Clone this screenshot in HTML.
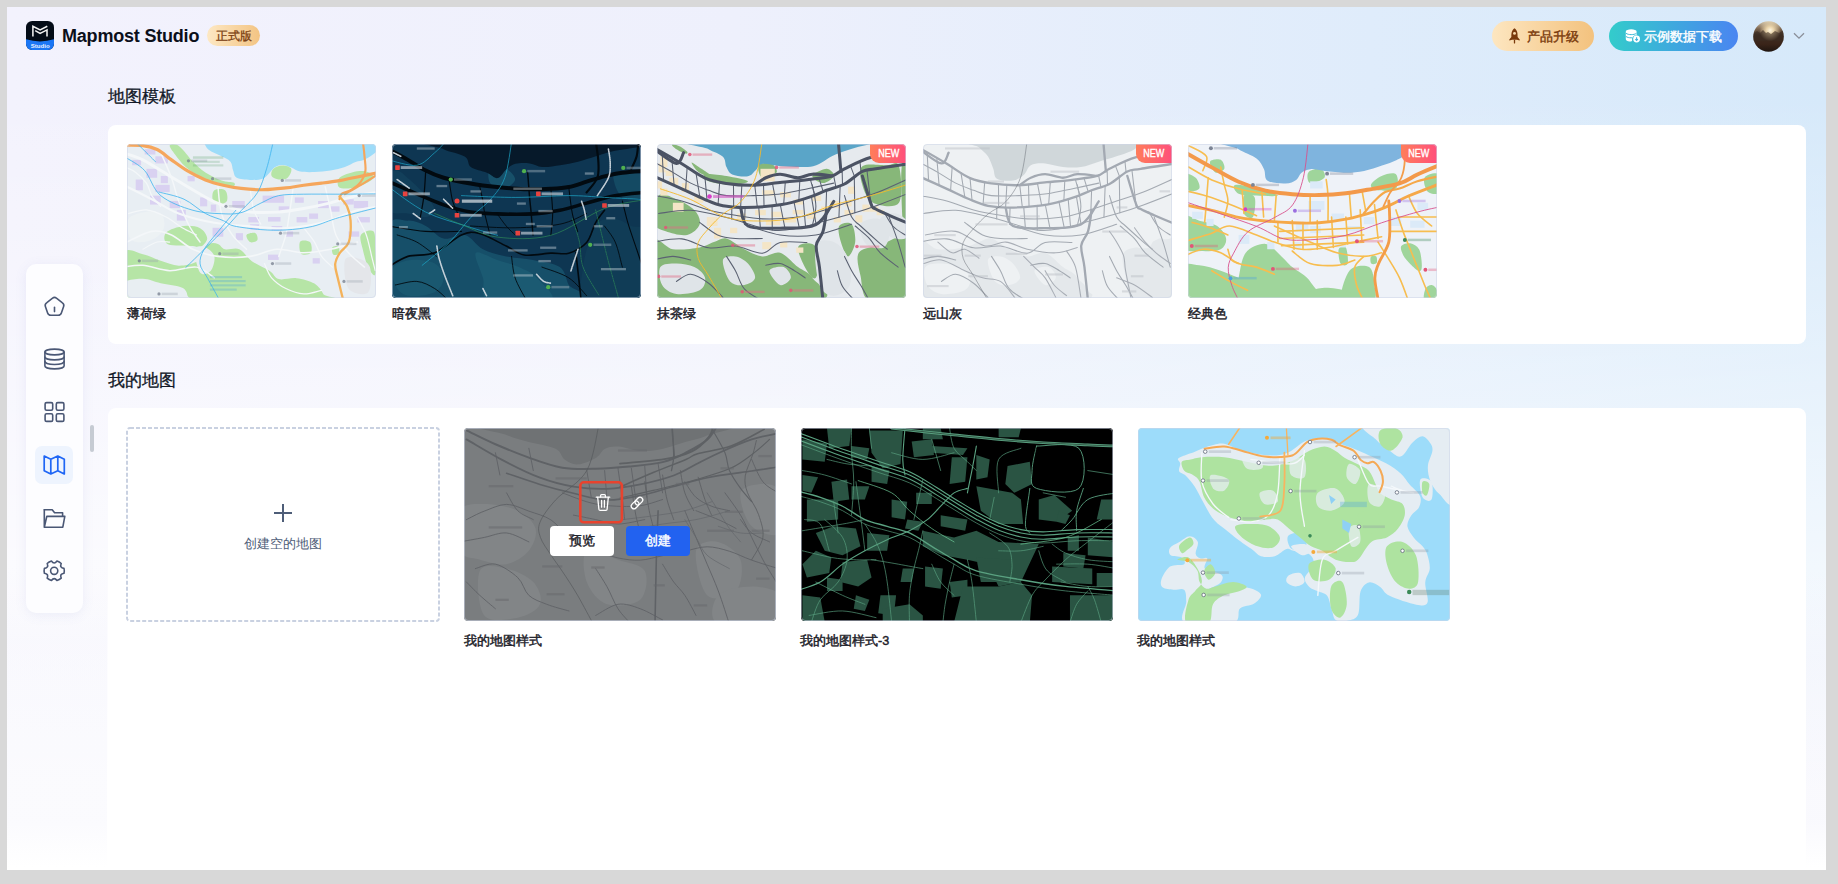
<!DOCTYPE html>
<html><head><meta charset="utf-8">
<style>
*{box-sizing:border-box;margin:0;padding:0}
html,body{width:1838px;height:884px;overflow:hidden;background:#d8d8d8;font-family:"Liberation Sans",sans-serif}
.app{position:absolute;left:7px;top:7px;width:1819px;height:863px;overflow:hidden;
 background:linear-gradient(180deg,rgba(255,255,255,0) 0px,rgba(255,255,255,0) 90px,#ffffff 780px),linear-gradient(90deg,#f3f2fd 0%,#eef0fc 40%,#dfecfb 75%,#d6e9fa 100%)}
.abs{position:absolute}
.logo{left:19.2px;top:14.2px;width:28px;height:29px}
.brand{left:55px;top:15.7px;font-size:18px;font-weight:bold;color:#0b0f1a;line-height:26px;letter-spacing:-0.2px}
.badge{left:200px;top:18px;width:53px;height:21px;border-radius:11px;background:linear-gradient(90deg,#fde8c4,#f3c483);color:#7b3f12;font-size:11.7px;line-height:22px;text-align:center;-webkit-text-stroke:0.3px #7b3f12}
.btn-up{left:1485px;top:13.5px;width:102px;height:30px;border-radius:15px;background:linear-gradient(90deg,#fde6c0,#f3c27e);color:#7a3a0c;font-size:13px;line-height:31px;-webkit-text-stroke:0.4px #7a3a0c}
.btn-dl{left:1602px;top:13.5px;width:129px;height:30px;border-radius:15px;background:linear-gradient(90deg,#33cccb,#4a85f1);color:#fff;font-size:13px;line-height:31px;-webkit-text-stroke:0.4px #fff}
.avatar{left:1746px;top:13.5px;width:30.5px;height:30.5px;border-radius:50%;background:radial-gradient(ellipse 30% 25% at 52% 30%,rgba(255,240,210,0.9) 0%,rgba(255,230,190,0) 100%),linear-gradient(180deg,#e9e2cf 0%,#b9a88a 18%,#5a4634 38%,#3b2a1f 60%,#2a1b14 100%)}
.title{font-size:17px;color:#111827;line-height:24px;-webkit-text-stroke:0.3px #111827}
.card{background:#fff;border-radius:8px}
.sidebar{left:19px;top:257px;width:57px;height:349px;border-radius:10px;background:#fdfdff;box-shadow:0 2px 12px rgba(110,120,200,0.10)}
.thumb{position:absolute;border-radius:4px;overflow:hidden}.thumb::after{content:"";position:absolute;left:0;top:0;right:0;bottom:0;border:1px solid rgba(205,214,232,0.55);border-radius:4px}
.label{position:absolute;font-size:12.6px;font-weight:400;color:#1d2129;line-height:18px;-webkit-text-stroke:0.45px #1d2129}
.newb{position:absolute;right:0;top:0;width:36px;height:19px;border-radius:0 4px 0 9px;background:linear-gradient(90deg,#ff7d5a,#ff4f7b);color:#fff;font-size:10px;line-height:20px;text-align:center}.newb span{display:inline-block;transform:scaleX(0.9);-webkit-text-stroke:0.35px #fff}
</style></head><body>
<div class="app">
 <!-- header -->
 <svg class="abs logo" viewBox="0 0 28 29">
  <defs><clipPath id="lc"><rect x="0" y="0" width="28" height="29" rx="6.2"/></clipPath></defs>
  <g clip-path="url(#lc)">
   <rect width="28" height="29" fill="#040c17"/>
   <path d="M0 18.3 Q14 22.6 28 18.3 V29 H0Z" fill="#1b76f4"/>
  </g>
  <path d="M6.9 15.6 V5.3 L14.1 8.9 L21.3 5.3" fill="none" stroke="#f2f2f2" stroke-width="1.55" stroke-linejoin="miter"/>
  <path d="M9.2 9.6 L14.1 12.4 L21 8.9 V15.6" fill="none" stroke="#f2f2f2" stroke-width="1.55" stroke-linejoin="miter"/>
  <text x="14.2" y="26.9" font-size="6.1" font-weight="bold" fill="#e8f0ff" text-anchor="middle" font-family="Liberation Sans">Studio</text>
 </svg>
 <div class="abs brand">Mapmost Studio</div>
 <div class="abs badge">正式版</div>

 <div class="abs btn-up"><svg class="abs" style="left:17px;top:7.5px" width="11" height="16" viewBox="0 0 11 16"><path d="M5.5 0.2 C8.4 2.1 8.8 5.4 8.6 9.0 L10.7 11.4 V12.6 L7.9 11.7 H3.1 L0.3 12.6 V11.4 L2.4 9.0 C2.2 5.4 2.6 2.1 5.5 0.2Z" fill="#7a3a0c"/><circle cx="5.5" cy="5.4" r="1.45" fill="#f9dcae"/><path d="M5.5 12.4 V14.9" stroke="#7a3a0c" stroke-width="1.3" stroke-linecap="round"/></svg><span class="abs" style="left:35px;top:0">产品升级</span></div>
 <div class="abs btn-dl"><svg class="abs" style="left:16px;top:8px" width="16" height="14" viewBox="0 0 16 14"><path d="M0.8 2.6 C0.8 1.2 3.2 0.3 6.2 0.3 C9.2 0.3 11.6 1.2 11.6 2.6 V6.4 A4 4 0 0 0 7.2 11.6 C7 11.8 6.6 12.6 6.2 12.6 C3.2 12.6 0.8 11.7 0.8 10.3Z" fill="#fff"/><path d="M1 4.3 C2.4 5.3 4 5.6 6.2 5.6 C8.4 5.6 10 5.3 11.4 4.3 M1 7.5 C2.4 8.5 4 8.8 6.2 8.8 C6.6 8.8 7 8.8 7.3 8.7" fill="none" stroke="#3cb8d8" stroke-width="1"/><circle cx="11.6" cy="10" r="3.4" fill="#fff"/><path d="M11.6 8.2 V11.4 M10.3 10.2 L11.6 11.5 L12.9 10.2" stroke="#3fb2dc" stroke-width="1.1" fill="none"/></svg><span class="abs" style="left:35px;top:0">示例数据下载</span></div>
 <svg class="abs" style="left:1746px;top:13.5px" width="31" height="31" viewBox="0 0 31 31"><defs><clipPath id="av"><circle cx="15.5" cy="15.5" r="15.2"/></clipPath><radialGradient id="sun" cx="0.55" cy="0.3" r="0.35"><stop offset="0" stop-color="#fff6e0"/><stop offset="0.35" stop-color="#e8d2a8"/><stop offset="1" stop-color="#e8d2a8" stop-opacity="0"/></radialGradient><linearGradient id="avg" x1="0" y1="0" x2="0" y2="1"><stop offset="0" stop-color="#d9cdb4"/><stop offset="0.25" stop-color="#7d6650"/><stop offset="0.45" stop-color="#3f2f24"/><stop offset="0.75" stop-color="#3a2419"/><stop offset="1" stop-color="#1e1510"/></linearGradient></defs><g clip-path="url(#av)"><rect width="31" height="31" fill="url(#avg)"/><rect width="31" height="31" fill="url(#sun)"/><path d="M0 13 L4 10 L7 12 L10 9 L13 12 L15 11 L18 13 L22 10 L26 12 L31 9 V20 H0Z" fill="#3b2c22" opacity="0.6"/></g></svg>
 <svg class="abs" style="left:1786px;top:25px" width="12" height="8" viewBox="0 0 12 8"><path d="M1 1.2 L6 6.2 L11 1.2" fill="none" stroke="#8a8f99" stroke-width="1.3"/></svg>

 <div class="abs" style="left:0;top:560px;width:100px;height:300px;background:linear-gradient(180deg,rgba(236,236,250,0) 0%,rgba(236,236,250,0.22) 25%,rgba(236,236,250,0.22) 85%,rgba(236,236,250,0) 100%)"></div>
 <div class="abs" style="left:1799px;top:560px;width:20px;height:300px;background:linear-gradient(180deg,rgba(236,236,250,0) 0%,rgba(236,236,250,0.3) 30%,rgba(236,236,250,0.3) 85%,rgba(236,236,250,0) 100%)"></div>
 <!-- sidebar -->
 <div class="abs sidebar"></div>
 <div class="abs" style="left:28px;top:439px;width:38px;height:38px;border-radius:7px;background:#eef4fe"></div>
 <svg class="abs" style="left:-7px;top:-7px" width="1838" height="884" viewBox="0 0 1838 884">
  <g fill="none" stroke="#4a5775" stroke-width="1.6" stroke-linejoin="round" stroke-linecap="round">
   <path d="M56.45 298.20 L62.45 302.80 Q64.40 304.20 63.62 306.47 L61.38 313.03 Q60.60 315.30 58.20 315.30 L50.80 315.30 Q48.40 315.30 47.62 313.03 L45.38 306.47 Q44.60 304.20 46.55 302.80 L52.55 298.20 Q54.50 296.6 56.45 298.20Z"/>
   <path d="M54.5 307.4 V311.6"/>
   <ellipse cx="54.5" cy="352" rx="9.6" ry="2.9"/>
   <path d="M44.9 352 V366 C44.9 367.6 49.2 368.9 54.5 368.9 C59.8 368.9 64.1 367.6 64.1 366 V352"/>
   <path d="M44.9 357 C44.9 358.6 49.2 359.9 54.5 359.9 C59.8 359.9 64.1 358.6 64.1 357"/>
   <path d="M44.9 361.6 C44.9 363.2 49.2 364.5 54.5 364.5 C59.8 364.5 64.1 363.2 64.1 361.6"/>
   <rect x="45.1" y="402.6" width="7.6" height="7.6" rx="1.5"/>
   <rect x="56.3" y="402.6" width="7.6" height="7.6" rx="1.5"/>
   <rect x="45.1" y="413.8" width="7.6" height="7.6" rx="1.5"/>
   <rect x="56.3" y="413.8" width="7.6" height="7.6" rx="1.5"/>
   <path d="M44.3 509.8 H52.2 L54.6 512.8 H62.6 V516"/>
   <path d="M44.3 509.8 V527.2 H62.8 L64.8 516.4 H46.8 L44.3 527.2"/>
   <path d="M64.00 568.36 Q64.61 570.80 64.00 573.24 Q59.40 573.80 61.22 578.07 Q59.40 579.81 56.98 580.51 Q54.20 576.80 51.42 580.51 Q49.00 579.81 47.18 578.07 Q49.00 573.80 44.40 573.24 Q43.79 570.80 44.40 568.36 Q49.00 567.80 47.18 563.53 Q49.00 561.79 51.42 561.09 Q54.20 564.80 56.98 561.09 Q59.40 561.79 61.22 563.53 Q59.40 567.80 64.00 568.36Z"/>
   <circle cx="54.2" cy="570.8" r="3.6"/>
  </g>
  <path d="M44.2 456 L50.8 459.2 L57.8 456 L64.3 459.2 V474 L57.8 470.8 L50.8 474 L44.2 470.8Z M50.8 459.2 V474 M57.8 456 V470.8" fill="none" stroke="#1f66f5" stroke-width="1.7" stroke-linejoin="round"/>
  <rect x="90" y="425" width="4" height="27" rx="2" fill="#c6cbd3"/>
 </svg>

 <!-- section 1 -->
 <div class="abs title" style="left:101px;top:78px">地图模板</div>
 <div class="abs card" style="left:101px;top:118px;width:1698px;height:219px"></div>
 <div class="thumb" style="left:120px;top:137px;width:249px;height:153.5px"><svg style="position:absolute;left:-2px;top:-2px" width="254" height="158" viewBox="0 0 1421 884" preserveAspectRatio="none"><rect width="1421" height="884" fill="#e8eef3"/><path d="M440 0 C445 9 453 32 470 45 C487 58 520 69 540 80 C560 91 579 97 590 110 C601 123 599 145 605 160 C611 175 609 191 625 200 C641 209 676 211 700 212 C724 213 752 212 770 205 C788 198 798 181 810 170 C822 159 828 147 840 140 C852 133 865 128 880 128 C895 128 913 136 930 142 C947 148 958 161 980 165 C1002 169 1032 169 1060 168 C1088 167 1122 165 1150 160 C1178 155 1207 148 1230 140 C1253 132 1272 119 1290 112 C1308 105 1322 107 1340 98 C1358 89 1385 73 1400 60 C1415 47 1425 32 1430 20 C1435 8 1595 -5 1430 -10 C1265 -15 605 -12 440 -10 C275 -8 435 -9 440 0Z" fill="#9ddcf9"/><path d="M290 15 C303 20 315 34 330 50 C345 66 360 90 380 110 C400 130 423 152 450 170 C477 188 513 205 540 215 C567 225 600 222 610 228 C620 234 615 248 600 250 C585 252 548 248 520 240 C492 232 460 217 430 200 C400 183 365 162 340 140 C315 118 295 90 280 70 C265 50 248 29 250 20 C252 11 277 10 290 15Z" fill="#b6e5a6"/><path d="M830 150 C840 140 863 132 880 132 C897 132 925 139 930 150 C935 161 922 190 910 200 C898 210 875 212 860 210 C845 208 825 200 820 190 C815 180 820 160 830 150Z" fill="#b6e5a6"/><path d="M1200 200 C1212 187 1245 176 1270 170 C1295 164 1330 160 1350 165 C1370 170 1393 188 1390 200 C1387 212 1353 230 1330 240 C1307 250 1272 258 1250 260 C1228 262 1203 260 1195 250 C1187 240 1188 213 1200 200Z" fill="#b6e5a6"/><path d="M230 507 C245 490 298 474 330 470 C362 466 398 470 420 482 C442 494 460 522 460 540 C460 558 433 583 420 590 C407 597 410 585 380 582 C350 579 265 584 240 572 C215 560 215 524 230 507Z" fill="#b6e5a6"/><path d="M500 270 C512 262 548 260 560 270 C572 280 577 317 570 330 C563 343 533 352 520 350 C507 348 493 333 490 320 C487 307 488 278 500 270Z" fill="#b6e5a6"/><path d="M-10 625 C8 581 65 621 100 628 C135 635 167 654 200 665 C233 676 267 691 300 692 C333 693 378 684 400 670 C422 656 418 627 430 610 C442 593 455 577 470 570 C485 563 505 565 520 570 C535 575 540 595 560 600 C580 605 615 589 640 600 C665 611 682 647 710 667 C738 687 785 705 810 722 C835 739 835 760 860 767 C885 774 927 758 960 762 C993 766 1035 777 1060 792 C1085 807 1102 836 1110 852 C1118 868 1297 884 1110 890 C923 896 177 934 -10 890 C-197 846 -28 669 -10 625Z" fill="#b6e5a6"/><path d="M1320 520 C1330 503 1377 487 1390 500 C1403 513 1398 560 1400 600 C1402 640 1407 725 1400 742 C1393 759 1372 724 1360 700 C1348 676 1337 630 1330 600 C1323 570 1310 537 1320 520Z" fill="#b6e5a6"/><path d="M980 557 C988 546 1025 550 1035 560 C1045 570 1048 609 1040 620 C1032 631 995 636 985 625 C975 614 972 568 980 557Z" fill="#b6e5a6"/><path d="M1160 590 C1165 582 1189 579 1195 585 C1201 591 1200 618 1195 625 C1190 632 1171 636 1165 630 C1159 624 1155 598 1160 590Z" fill="#b6e5a6"/><path d="M680 520 C685 512 720 505 730 510 C740 515 745 542 740 550 C735 558 710 565 700 560 C690 555 675 528 680 520Z" fill="#b6e5a6"/><path d="M1230 662 C1238 634 1277 644 1300 650 C1323 656 1360 668 1370 700 C1380 732 1380 822 1360 842 C1340 862 1272 850 1250 820 C1228 790 1222 690 1230 662Z" fill="#e4e6ea"/><path d="M-10 790 C8 769 65 765 100 765 C135 765 163 782 200 790 C237 798 295 803 320 815 C345 827 347 848 350 860 C353 872 400 885 340 890 C280 895 48 907 -10 890 C-68 873 -28 811 -10 790Z" fill="#e8eef2"/><path d="M390 600 C395 577 432 583 450 590 C468 597 495 618 500 640 C505 662 493 705 480 720 C467 735 435 750 420 730 C405 710 385 623 390 600Z" fill="#e8eef2"/><path d="M20 430 C35 405 90 395 120 390 C150 385 183 387 200 400 C217 413 223 448 220 470 C217 492 200 515 180 530 C160 545 125 558 100 560 C75 562 43 562 30 540 C17 518 5 455 20 430Z" fill="#edf2f4"/><rect x="110" y="40" width="60" height="30" fill="#d9d1f1"/><rect x="170" y="80" width="70" height="40" fill="#d9d1f1"/><rect x="120" y="150" width="60" height="50" fill="#d9d1f1"/><rect x="60" y="210" width="40" height="60" fill="#d9d1f1"/><rect x="170" y="240" width="80" height="40" fill="#d9d1f1"/><rect x="140" y="300" width="60" height="50" fill="#d9d1f1"/><rect x="250" y="330" width="60" height="40" fill="#d9d1f1"/><rect x="290" y="380" width="50" height="60" fill="#d9d1f1"/><rect x="420" y="310" width="40" height="50" fill="#d9d1f1"/><rect x="480" y="350" width="30" height="40" fill="#d9d1f1"/><rect x="490" y="480" width="60" height="50" fill="#d9d1f1"/><rect x="600" y="330" width="70" height="40" fill="#d9d1f1"/><rect x="690" y="420" width="60" height="30" fill="#d9d1f1"/><rect x="770" y="300" width="120" height="40" fill="#d9d1f1"/><rect x="800" y="420" width="70" height="25" fill="#d9d1f1"/><rect x="950" y="310" width="50" height="30" fill="#d9d1f1"/><rect x="960" y="420" width="60" height="30" fill="#d9d1f1"/><rect x="1030" y="400" width="50" height="30" fill="#d9d1f1"/><rect x="1080" y="330" width="60" height="40" fill="#d9d1f1"/><rect x="1150" y="360" width="50" height="30" fill="#d9d1f1"/><rect x="1220" y="320" width="60" height="30" fill="#d9d1f1"/><rect x="1280" y="330" width="80" height="40" fill="#d9d1f1"/><rect x="1300" y="420" width="70" height="30" fill="#d9d1f1"/><rect x="1250" y="500" width="60" height="30" fill="#d9d1f1"/><rect x="860" y="360" width="60" height="30" fill="#d9d1f1"/><rect x="700" y="460" width="50" height="30" fill="#d9d1f1"/><rect x="820" y="470" width="60" height="25" fill="#d9d1f1"/><rect x="620" y="510" width="40" height="40" fill="#d9d1f1"/><rect x="900" y="500" width="40" height="30" fill="#d9d1f1"/><rect x="800" y="630" width="60" height="30" fill="#d9d1f1"/><rect x="1050" y="650" width="40" height="30" fill="#d9d1f1"/><rect x="40" y="100" width="50" height="30" fill="#d9d1f1"/><rect x="200" y="190" width="40" height="40" fill="#d9d1f1"/><rect x="350" y="190" width="40" height="30" fill="#d9d1f1"/><path d="M-10 60 C8 67 57 78 100 100 C143 122 200 160 250 190 C300 220 358 256 400 280 C442 304 467 320 500 335 C533 350 567 362 600 372 C633 382 658 389 700 392 C742 395 800 395 850 392 C900 389 950 381 1000 372 C1050 363 1100 352 1150 340 C1200 328 1253 310 1300 300 C1347 290 1408 283 1430 280" fill="none" stroke="#f4f7f9" stroke-width="16" stroke-linecap="round" stroke-linejoin="round"/><path d="M-10 240 C17 253 98 293 150 320 C202 347 242 378 300 400 C358 422 433 440 500 452 C567 464 633 467 700 472 C767 477 833 485 900 482 C967 479 1033 469 1100 452 C1167 435 1245 397 1300 382 C1355 367 1408 364 1430 360" fill="none" stroke="#f4f7f9" stroke-width="12" stroke-linecap="round" stroke-linejoin="round"/><path d="M10 560 C33 550 108 507 150 500 C192 493 222 503 260 520 C298 537 337 580 380 600 C423 620 467 633 520 640 C573 647 645 647 700 640 C755 633 800 603 850 600 C900 597 950 620 1000 620 C1050 620 1100 610 1150 600 C1200 590 1275 567 1300 560" fill="none" stroke="#f4f7f9" stroke-width="9" stroke-linecap="round" stroke-linejoin="round"/><path d="M-10 700 C8 698 57 687 100 690 C143 693 200 718 250 720 C300 722 358 693 400 700 C442 707 483 750 500 760" fill="none" stroke="#f4f7f9" stroke-width="8" stroke-linecap="round" stroke-linejoin="round"/><path d="M200 60 C210 83 243 155 260 200 C277 245 283 285 300 330 C317 375 340 432 360 470 C380 508 410 545 420 560" fill="none" stroke="#f4f7f9" stroke-width="8" stroke-linecap="round" stroke-linejoin="round"/><path d="M520 250 C523 275 527 355 540 400 C553 445 577 487 600 520 C623 553 667 587 680 600" fill="none" stroke="#f4f7f9" stroke-width="8" stroke-linecap="round" stroke-linejoin="round"/><path d="M940 260 C937 283 927 357 920 400 C913 443 910 480 900 520 C890 560 867 620 860 640" fill="none" stroke="#f4f7f9" stroke-width="8" stroke-linecap="round" stroke-linejoin="round"/><path d="M1120 250 C1125 272 1140 335 1150 380 C1160 425 1163 480 1180 520 C1197 560 1223 590 1250 620 C1277 650 1325 687 1340 700" fill="none" stroke="#f4f7f9" stroke-width="8" stroke-linecap="round" stroke-linejoin="round"/><path d="M20 400 C37 397 85 377 120 380 C155 383 197 403 230 420 C263 437 292 463 320 480 C348 497 387 513 400 520" fill="none" stroke="#f4f7f9" stroke-width="7" stroke-linecap="round" stroke-linejoin="round"/><path d="M700 260 C703 280 710 347 720 380 C730 413 753 447 760 460" fill="none" stroke="#f4f7f9" stroke-width="7" stroke-linecap="round" stroke-linejoin="round"/><path d="M1000 480 C1010 493 1043 533 1060 560 C1077 587 1083 617 1100 640 C1117 663 1150 690 1160 700" fill="none" stroke="#f4f7f9" stroke-width="7" stroke-linecap="round" stroke-linejoin="round"/><path d="M1300 420 C1308 437 1337 483 1350 520 C1363 557 1372 607 1380 640 C1388 673 1397 707 1400 720" fill="none" stroke="#f4f7f9" stroke-width="7" stroke-linecap="round" stroke-linejoin="round"/><path d="M0 140 C10 145 40 155 60 170 C80 185 105 208 120 230 C135 252 137 278 150 300 C163 322 192 350 200 360" fill="none" stroke="#f4f7f9" stroke-width="7" stroke-linecap="round" stroke-linejoin="round"/><path d="M780 680 C787 693 800 737 820 760 C840 783 870 805 900 820 C930 835 967 848 1000 850 C1033 852 1083 833 1100 830" fill="none" stroke="#f4f7f9" stroke-width="7" stroke-linecap="round" stroke-linejoin="round"/><path d="M100 600 C113 593 155 567 180 560 C205 553 238 560 250 560" fill="none" stroke="#f4f7f9" stroke-width="6" stroke-linecap="round" stroke-linejoin="round"/><path d="M-10 18 C8 18 68 16 100 20 C132 24 153 29 180 42 C207 55 232 80 260 100 C288 120 318 143 350 162 C382 181 417 199 450 212 C483 225 517 234 550 242 C583 250 612 256 650 260 C688 264 738 268 780 267 C822 266 863 261 900 257 C937 253 967 246 1000 242 C1033 238 1067 234 1100 230 C1133 226 1167 222 1200 216 C1233 210 1262 204 1300 196 C1338 188 1408 173 1430 168" fill="none" stroke="#f5a65c" stroke-width="18" stroke-linecap="round" stroke-linejoin="round"/><path d="M1330 -5 C1332 9 1338 52 1340 80 C1342 108 1348 136 1345 160 C1342 184 1333 204 1320 222 C1307 240 1283 257 1265 268 C1247 279 1223 281 1212 290 C1201 299 1202 315 1200 320" fill="none" stroke="#f5a65c" stroke-width="12" stroke-linecap="round" stroke-linejoin="round"/><path d="M1230 292 C1245 283 1292 257 1320 240 C1348 223 1382 203 1400 190 C1418 177 1425 165 1430 160" fill="none" stroke="#f5a65c" stroke-width="12" stroke-linecap="round" stroke-linejoin="round"/><path d="M1200 305 C1207 314 1232 338 1242 360 C1252 382 1260 407 1262 440 C1264 473 1262 530 1252 560 C1242 590 1215 600 1202 620 C1189 640 1178 659 1176 682 C1174 705 1182 725 1190 760 C1198 795 1217 868 1222 890" fill="none" stroke="#f4b25a" stroke-width="13" stroke-linecap="round" stroke-linejoin="round"/><path d="M10 90 C27 102 78 125 110 160 C142 195 155 263 200 300 C245 337 320 365 380 382 C440 399 513 400 560 402 C607 404 627 402 660 392 C693 382 727 357 760 342 C793 327 820 308 860 300 C900 292 943 293 1000 292 C1057 291 1128 292 1200 292 C1272 292 1392 290 1430 290" fill="none" stroke="#3db4ef" stroke-width="4.5" stroke-linecap="round" stroke-linejoin="round"/><path d="M190 280 C213 287 287 300 330 320 C373 340 413 380 450 400 C487 420 523 428 550 440 C577 452 575 462 610 470 C645 478 712 486 760 490 C808 494 852 495 900 492 C948 489 1000 484 1050 472 C1100 460 1137 440 1200 422 C1263 404 1392 372 1430 362" fill="none" stroke="#3db4ef" stroke-width="4.5" stroke-linecap="round" stroke-linejoin="round"/><path d="M830 -5 C824 21 807 102 792 150 C777 198 765 243 742 282 C719 321 682 349 652 382 C622 415 595 447 562 482 C529 517 489 555 452 592 C415 629 359 684 340 702" fill="none" stroke="#3db4ef" stroke-width="4.5" stroke-linecap="round" stroke-linejoin="round"/><path d="M620 382 C603 402 550 465 520 502 C490 539 459 572 442 602 C425 632 417 655 420 682 C423 709 443 727 462 762 C481 797 520 869 532 890" fill="none" stroke="#3db4ef" stroke-width="4.5" stroke-linecap="round" stroke-linejoin="round"/><path d="M70 10 C80 20 113 53 130 70 C147 87 163 103 170 110" fill="none" stroke="#3db4ef" stroke-width="4.5" stroke-linecap="round" stroke-linejoin="round"/><circle cx="355" cy="105" r="9" fill="#7c8494" opacity="0.8"/><rect x="370" y="98" width="90" height="14" fill="#9aa3b0" opacity="0.35"/><circle cx="490" cy="205" r="9" fill="#7c8494" opacity="0.8"/><rect x="505" y="198" width="90" height="14" fill="#9aa3b0" opacity="0.35"/><circle cx="880" cy="215" r="9" fill="#7c8494" opacity="0.8"/><rect x="895" y="208" width="90" height="14" fill="#9aa3b0" opacity="0.35"/><circle cx="565" cy="360" r="9" fill="#7c8494" opacity="0.8"/><rect x="580" y="353" width="90" height="14" fill="#9aa3b0" opacity="0.35"/><circle cx="870" cy="510" r="9" fill="#7c8494" opacity="0.8"/><rect x="885" y="503" width="90" height="14" fill="#9aa3b0" opacity="0.35"/><circle cx="1190" cy="570" r="9" fill="#7c8494" opacity="0.8"/><rect x="1205" y="563" width="90" height="14" fill="#9aa3b0" opacity="0.35"/><circle cx="530" cy="625" r="9" fill="#7c8494" opacity="0.8"/><rect x="545" y="618" width="90" height="14" fill="#9aa3b0" opacity="0.35"/><circle cx="80" cy="665" r="9" fill="#7c8494" opacity="0.8"/><rect x="95" y="658" width="90" height="14" fill="#9aa3b0" opacity="0.35"/><circle cx="825" cy="680" r="9" fill="#7c8494" opacity="0.8"/><rect x="840" y="673" width="90" height="14" fill="#9aa3b0" opacity="0.35"/><circle cx="190" cy="850" r="9" fill="#7c8494" opacity="0.8"/><rect x="205" y="843" width="90" height="14" fill="#9aa3b0" opacity="0.35"/><circle cx="1225" cy="780" r="9" fill="#7c8494" opacity="0.8"/><rect x="1240" y="773" width="90" height="14" fill="#9aa3b0" opacity="0.35"/><circle cx="1310" cy="300" r="9" fill="#7c8494" opacity="0.8"/><rect x="1325" y="293" width="90" height="14" fill="#9aa3b0" opacity="0.35"/><rect x="380" y="80" width="170" height="14" fill="#4f9a60" opacity="0.25"/><rect x="380" y="105" width="150" height="12" fill="#4f9a60" opacity="0.22"/><rect x="380" y="125" width="170" height="12" fill="#4f9a60" opacity="0.22"/><rect x="475" y="750" width="180" height="12" fill="#3d9be0" opacity="0.28"/><rect x="475" y="772" width="200" height="12" fill="#3d9be0" opacity="0.28"/><rect x="475" y="796" width="200" height="12" fill="#3d9be0" opacity="0.28"/><rect x="475" y="820" width="150" height="12" fill="#3d9be0" opacity="0.28"/></svg></div>
 <div class="thumb" style="left:385.2px;top:137px;width:249px;height:153.5px"><svg style="position:absolute;left:-2.2px;top:-2px" width="254" height="158" viewBox="0 0 1421 884" preserveAspectRatio="none"><rect width="1421" height="884" fill="#0e3652"/><path d="M-10 480 C8 405 65 442 100 440 C135 438 167 453 200 470 C233 487 263 532 300 540 C337 548 383 510 420 520 C457 530 482 580 520 600 C558 620 603 630 650 640 C697 650 750 650 800 660 C850 670 917 677 950 700 C983 723 983 768 1000 800 C1017 832 1218 875 1050 890 C882 905 167 958 -10 890 C-187 822 -28 555 -10 480Z" fill="#164f69"/><path d="M480 620 C493 603 560 647 600 660 C640 673 683 683 720 700 C757 717 790 728 820 760 C850 792 943 868 900 890 C857 912 623 912 560 890 C497 868 533 805 520 760 C507 715 467 637 480 620Z" fill="#1b5a72"/><path d="M-10 200 C-2 163 18 157 40 160 C62 163 93 197 120 220 C147 243 178 273 200 300 C222 327 250 360 250 380 C250 400 225 417 200 420 C175 423 135 407 100 400 C65 393 8 413 -10 380 C-28 347 -18 237 -10 200Z" fill="#123f5a"/><path d="M1150 470 C1178 425 1217 430 1250 430 C1283 430 1320 455 1350 470 C1380 485 1417 450 1430 520 C1443 590 1485 828 1430 890 C1375 952 1158 922 1100 890 C1042 858 1072 770 1080 700 C1088 630 1122 515 1150 470Z" fill="#103c56"/><path d="M20 700 C35 677 82 663 120 660 C158 657 220 663 250 680 C280 697 300 733 300 760 C300 787 283 823 250 840 C217 857 137 867 100 860 C63 853 43 827 30 800 C17 773 5 723 20 700Z" fill="#1a5870"/><path d="M560 140 C575 127 627 138 650 150 C673 162 702 192 700 210 C698 228 663 257 640 260 C617 263 573 250 560 230 C547 210 545 153 560 140Z" fill="#175069"/><path d="M1250 180 C1258 157 1320 167 1350 170 C1380 173 1417 178 1430 200 C1443 222 1452 282 1430 300 C1408 318 1330 330 1300 310 C1270 290 1242 203 1250 180Z" fill="#144a63"/><path d="M250 -10 C62 -2 272 25 300 40 C328 55 395 65 420 82 C445 99 432 125 452 140 C472 155 517 162 542 172 C567 182 584 205 602 202 C620 199 635 165 652 152 C669 139 680 127 702 122 C724 117 757 117 782 120 C807 123 824 138 852 140 C880 142 919 135 952 130 C985 125 1019 118 1052 110 C1085 102 1119 90 1152 80 C1185 70 1206 60 1252 50 C1298 40 1400 30 1430 20 C1460 10 1627 -5 1430 -10 C1233 -15 438 -18 250 -10Z" fill="#06192a"/><path d="M-10 40 C8 50 65 80 100 100 C135 120 167 143 200 160 C233 177 258 188 300 200 C342 212 400 223 450 232 C500 241 550 247 600 252 C650 257 700 262 750 264 C800 266 858 264 900 262 C942 260 967 259 1000 252 C1033 245 1067 232 1100 222 C1133 212 1167 200 1200 192 C1233 184 1262 177 1300 172 C1338 167 1408 162 1430 160" fill="none" stroke="#020a10" stroke-width="22" stroke-linecap="round" stroke-linejoin="round"/><path d="M-10 220 C17 232 98 268 150 290 C202 312 250 335 300 352 C350 369 400 384 450 392 C500 400 542 400 600 402 C658 404 742 405 800 402 C858 399 900 392 950 382 C1000 372 1050 355 1100 342 C1150 329 1195 312 1250 302 C1305 292 1400 285 1430 282" fill="none" stroke="#020a10" stroke-width="20" stroke-linecap="round" stroke-linejoin="round"/><path d="M1150 -10 C1152 8 1163 65 1165 100 C1167 135 1171 170 1160 200 C1149 230 1110 268 1100 282" fill="none" stroke="#020a10" stroke-width="12" stroke-linecap="round" stroke-linejoin="round"/><path d="M1390 -10 C1388 5 1387 53 1380 80 C1373 107 1355 138 1350 150" fill="none" stroke="#020a10" stroke-width="12" stroke-linecap="round" stroke-linejoin="round"/><path d="M-10 700 C8 690 57 653 100 640 C143 627 200 640 250 620 C300 600 358 538 400 520 C442 502 458 502 500 512 C542 522 608 562 650 582 C692 602 708 625 750 632 C792 639 858 624 900 622 C942 620 967 632 1000 622 C1033 612 1075 590 1100 562 C1125 534 1133 482 1150 452 C1167 422 1192 394 1200 382" fill="none" stroke="#020a10" stroke-width="9" stroke-linecap="round" stroke-linejoin="round"/><path d="M1040 620 L1070 890" fill="none" stroke="#020a10" stroke-width="9" stroke-linecap="round" stroke-linejoin="round"/><path d="M200 160 C198 183 195 257 190 300 C185 343 173 400 170 420" fill="none" stroke="#020a10" stroke-width="7" stroke-linecap="round" stroke-linejoin="round"/><path d="M330 210 C333 230 342 298 350 330 C358 362 375 388 380 400" fill="none" stroke="#020a10" stroke-width="6" stroke-linecap="round" stroke-linejoin="round"/><path d="M500 240 C503 255 515 303 520 330 C525 357 523 368 530 400 C537 432 555 500 560 520" fill="none" stroke="#020a10" stroke-width="6" stroke-linecap="round" stroke-linejoin="round"/><path d="M770 170 C772 192 777 262 780 300 C783 338 787 363 790 400 C793 437 798 500 800 520" fill="none" stroke="#020a10" stroke-width="8" stroke-linecap="round" stroke-linejoin="round"/><path d="M900 262 C902 285 910 357 910 400 C910 443 902 500 900 520" fill="none" stroke="#020a10" stroke-width="6" stroke-linecap="round" stroke-linejoin="round"/><path d="M1000 252 C1003 277 1012 359 1020 400 C1028 441 1045 483 1050 500" fill="none" stroke="#020a10" stroke-width="6" stroke-linecap="round" stroke-linejoin="round"/><path d="M-10 470 C25 475 132 495 200 500 C268 505 367 500 400 500" fill="none" stroke="#020a10" stroke-width="6" stroke-linecap="round" stroke-linejoin="round"/><path d="M600 402 C608 413 633 450 650 470 C667 490 692 512 700 520" fill="none" stroke="#020a10" stroke-width="5" stroke-linecap="round" stroke-linejoin="round"/><path d="M450 470 C492 472 617 482 700 480 C783 478 883 473 950 460 C1017 447 1075 410 1100 400" fill="none" stroke="#020a10" stroke-width="5" stroke-linecap="round" stroke-linejoin="round"/><path d="M40 520 C58 527 113 540 150 560 C187 580 242 627 260 640" fill="none" stroke="#020a10" stroke-width="5" stroke-linecap="round" stroke-linejoin="round"/><path d="M680 640 C683 660 687 720 700 760 C713 800 750 860 760 880" fill="none" stroke="#020a10" stroke-width="5" stroke-linecap="round" stroke-linejoin="round"/><path d="M850 700 C875 710 958 733 1000 760 C1042 787 1083 843 1100 860" fill="none" stroke="#020a10" stroke-width="5" stroke-linecap="round" stroke-linejoin="round"/><path d="M1300 330 C1305 350 1317 405 1330 450 C1343 495 1365 555 1380 600 C1395 645 1413 700 1420 720" fill="none" stroke="#020a10" stroke-width="6" stroke-linecap="round" stroke-linejoin="round"/><path d="M1200 470 C1210 485 1243 522 1260 560 C1277 598 1293 677 1300 700" fill="none" stroke="#020a10" stroke-width="5" stroke-linecap="round" stroke-linejoin="round"/><path d="M30 800 C50 797 113 777 150 780 C187 783 220 802 250 820 C280 838 317 878 330 890" fill="none" stroke="#020a10" stroke-width="5" stroke-linecap="round" stroke-linejoin="round"/><path d="M1222 40 C1224 53 1232 93 1232 120 C1232 147 1234 170 1222 200 C1210 230 1170 283 1160 300" fill="none" stroke="#d6dee4" stroke-width="9" stroke-linecap="round" stroke-linejoin="round" stroke-dasharray="6 5" opacity="0.9"/><path d="M1072 332 C1074 340 1083 363 1087 380 C1091 397 1095 423 1097 432" fill="none" stroke="#d6dee4" stroke-width="9" stroke-linecap="round" stroke-linejoin="round" stroke-dasharray="6 5" opacity="0.9"/><path d="M1052 600 C1049 610 1039 640 1032 660 C1025 680 1015 712 1012 722" fill="none" stroke="#d6dee4" stroke-width="9" stroke-linecap="round" stroke-linejoin="round" stroke-dasharray="6 5" opacity="0.9"/><path d="M262 582 C264 592 266 615 272 640 C278 665 287 693 300 730 C313 767 343 840 352 862" fill="none" stroke="#d6dee4" stroke-width="9" stroke-linecap="round" stroke-linejoin="round" stroke-dasharray="6 5" opacity="0.9"/><path d="M20 60 L60 80" fill="none" stroke="#d6dee4" stroke-width="9" stroke-linecap="round" stroke-linejoin="round" stroke-dasharray="6 5" opacity="0.9"/><path d="M40 210 L110 260" fill="none" stroke="#d6dee4" stroke-width="9" stroke-linecap="round" stroke-linejoin="round" stroke-dasharray="6 5" opacity="0.9"/><path d="M300 320 L350 370" fill="none" stroke="#d6dee4" stroke-width="9" stroke-linecap="round" stroke-linejoin="round" stroke-dasharray="6 5" opacity="0.9"/><path d="M220 400 L250 380" fill="none" stroke="#d6dee4" stroke-width="9" stroke-linecap="round" stroke-linejoin="round" stroke-dasharray="6 5" opacity="0.9"/><path d="M130 400 L170 430" fill="none" stroke="#d6dee4" stroke-width="9" stroke-linecap="round" stroke-linejoin="round" stroke-dasharray="6 5" opacity="0.9"/><path d="M820 740 C827 747 847 772 860 780 C873 788 893 788 900 790" fill="none" stroke="#d6dee4" stroke-width="9" stroke-linecap="round" stroke-linejoin="round" stroke-dasharray="6 5" opacity="0.9"/><path d="M520 820 L540 860" fill="none" stroke="#d6dee4" stroke-width="9" stroke-linecap="round" stroke-linejoin="round" stroke-dasharray="6 5" opacity="0.9"/><path d="M682 -10 C675 25 662 145 642 200 C622 255 594 285 562 322 C530 359 490 382 452 422 C414 462 377 517 332 562 C287 607 205 669 180 690" fill="none" stroke="#1ea7c9" stroke-width="4" stroke-linecap="round" stroke-linejoin="round"/><path d="M-10 250 C25 274 126 355 200 392 C274 429 365 450 432 472 C499 494 574 514 602 522" fill="none" stroke="#1ea7c9" stroke-width="4" stroke-linecap="round" stroke-linejoin="round"/><path d="M400 300 C450 302 600 310 700 310 C800 310 917 300 1000 300 C1083 300 1128 306 1200 310 C1272 314 1392 320 1430 322" fill="none" stroke="#1ea7c9" stroke-width="4" stroke-linecap="round" stroke-linejoin="round"/><path d="M-10 100 C17 105 107 137 150 130 C193 123 225 80 250 60 C275 40 292 18 300 10" fill="none" stroke="#1ea7c9" stroke-width="4" stroke-linecap="round" stroke-linejoin="round"/><path d="M250 400 C275 410 342 440 400 462 C458 484 517 522 600 532 C683 542 800 549 900 522 C1000 495 1112 405 1200 372 C1288 339 1392 330 1430 322" fill="none" stroke="#39a35a" stroke-width="3" stroke-linecap="round" stroke-linejoin="round"/><path d="M1150 380 C1155 400 1167 447 1180 500 C1193 553 1213 637 1230 700 C1247 763 1272 850 1280 880" fill="none" stroke="#39a35a" stroke-width="3" stroke-linecap="round" stroke-linejoin="round" stroke-dasharray="8 6"/><path d="M1020 430 C1027 452 1050 515 1060 560 C1070 605 1062 650 1080 700 C1098 750 1155 833 1170 860" fill="none" stroke="#39a35a" stroke-width="3" stroke-linecap="round" stroke-linejoin="round" stroke-dasharray="8 6"/><rect x="29" y="130" width="26" height="26" rx="3" fill="#e8433f"/><rect x="60" y="135" width="120" height="16" fill="#c9d3da" opacity="0.65"/><rect x="72" y="277" width="26" height="26" rx="3" fill="#e8433f"/><rect x="103" y="282" width="120" height="16" fill="#c9d3da" opacity="0.65"/><rect x="362" y="397" width="26" height="26" rx="3" fill="#e8433f"/><rect x="393" y="402" width="120" height="16" fill="#c9d3da" opacity="0.65"/><rect x="702" y="497" width="26" height="26" rx="3" fill="#e8433f"/><rect x="733" y="502" width="120" height="16" fill="#c9d3da" opacity="0.65"/><rect x="817" y="277" width="26" height="26" rx="3" fill="#e8433f"/><rect x="848" y="282" width="120" height="16" fill="#c9d3da" opacity="0.65"/><rect x="1187" y="342" width="26" height="26" rx="3" fill="#e8433f"/><rect x="1218" y="347" width="120" height="16" fill="#c9d3da" opacity="0.65"/><circle cx="375" cy="330" r="14" fill="#e8433f"/><rect x="402" y="322" width="170" height="18" fill="#dfe5ea" opacity="0.7"/><circle cx="750" cy="163" r="12" fill="#50b04f"/><rect x="768" y="156" width="100" height="14" fill="#8fa3b0" opacity="0.5"/><circle cx="340" cy="210" r="12" fill="#50b04f"/><rect x="358" y="203" width="100" height="14" fill="#8fa3b0" opacity="0.5"/><circle cx="1120" cy="575" r="12" fill="#50b04f"/><rect x="1138" y="568" width="100" height="14" fill="#8fa3b0" opacity="0.5"/><circle cx="885" cy="812" r="12" fill="#50b04f"/><rect x="903" y="805" width="100" height="14" fill="#8fa3b0" opacity="0.5"/><circle cx="1305" cy="145" r="12" fill="#50b04f"/><rect x="1323" y="138" width="100" height="14" fill="#8fa3b0" opacity="0.5"/><rect x="690" y="255" width="160" height="13" fill="#c5d0d8" opacity="0.45"/><rect x="710" y="338" width="50" height="13" fill="#c5d0d8" opacity="0.45"/><rect x="830" y="380" width="80" height="13" fill="#c5d0d8" opacity="0.45"/><rect x="760" y="452" width="50" height="13" fill="#c5d0d8" opacity="0.45"/><rect x="820" y="465" width="90" height="13" fill="#c5d0d8" opacity="0.45"/><rect x="520" y="500" width="80" height="13" fill="#c5d0d8" opacity="0.45"/><rect x="660" y="600" width="110" height="13" fill="#c5d0d8" opacity="0.45"/><rect x="840" y="585" width="90" height="13" fill="#c5d0d8" opacity="0.45"/><rect x="830" y="660" width="70" height="13" fill="#c5d0d8" opacity="0.45"/><rect x="690" y="740" width="110" height="13" fill="#c5d0d8" opacity="0.45"/><rect x="1140" y="465" width="50" height="13" fill="#c5d0d8" opacity="0.45"/><rect x="150" y="30" width="100" height="13" fill="#c5d0d8" opacity="0.45"/><rect x="1090" y="170" width="50" height="13" fill="#c5d0d8" opacity="0.45"/><rect x="1180" y="705" width="140" height="13" fill="#c5d0d8" opacity="0.45"/><rect x="1210" y="420" width="50" height="13" fill="#c5d0d8" opacity="0.45"/><rect x="260" y="240" width="60" height="13" fill="#c5d0d8" opacity="0.45"/><rect x="450" y="270" width="60" height="13" fill="#c5d0d8" opacity="0.45"/><rect x="50" y="470" width="50" height="13" fill="#c5d0d8" opacity="0.45"/></svg></div>
 <div class="thumb" style="left:650.4px;top:137px;width:249px;height:153.5px"><svg style="position:absolute;left:-2.4px;top:-2px" width="254" height="158" viewBox="0 0 1421 884" preserveAspectRatio="none"><rect width="1421" height="884" fill="#e6eaee"/><path d="M-10 560 C8 512 57 595 100 600 C143 605 212 597 250 590 C288 583 305 568 330 560 C355 552 372 533 400 540 C428 547 467 583 500 600 C533 617 567 637 600 640 C633 643 667 610 700 620 C733 630 770 677 800 700 C830 723 863 728 880 760 C897 792 1048 868 900 890 C752 912 142 945 -10 890 C-162 835 -28 608 -10 560Z" fill="#87b779"/><path d="M1160 135 C1183 117 1266 130 1300 130 C1334 130 1354 100 1365 135 C1376 170 1389 306 1365 340 C1341 374 1254 357 1220 340 C1186 323 1170 274 1160 240 C1150 206 1137 153 1160 135Z" fill="#87b779"/><path d="M1140 620 C1157 592 1202 593 1250 580 C1298 567 1400 488 1430 540 C1460 592 1468 832 1430 890 C1392 948 1247 913 1200 890 C1153 867 1160 795 1150 750 C1140 705 1123 648 1140 620Z" fill="#87b779"/><path d="M800 590 C805 565 860 562 880 570 C900 578 917 608 920 640 C923 672 912 747 900 760 C888 773 867 748 850 720 C833 692 795 615 800 590Z" fill="#87b779"/><path d="M1030 470 C1040 453 1085 445 1100 460 C1115 475 1123 530 1120 560 C1117 590 1093 640 1080 640 C1067 640 1048 588 1040 560 C1032 532 1020 487 1030 470Z" fill="#87b779"/><path d="M20 300 C42 278 87 307 120 320 C153 333 198 357 220 380 C242 403 257 437 250 460 C243 483 212 513 180 520 C148 527 92 512 60 500 C28 488 -3 483 -10 450 C-17 417 -2 322 20 300Z" fill="#87b779"/><path d="M95 15 C98 12 126 18 140 25 C154 32 175 48 180 55 C185 62 180 68 170 65 C160 62 132 48 120 40 C108 32 92 18 95 15Z" fill="#87b779"/><path d="M205 115 C208 112 242 138 260 150 C278 162 303 178 310 185 C317 192 312 198 300 195 C288 192 256 178 240 165 C224 152 202 118 205 115Z" fill="#87b779"/><path d="M580 130 C588 117 633 113 650 120 C667 127 688 157 680 170 C672 183 617 207 600 200 C583 193 572 143 580 130Z" fill="#87b779"/><path d="M880 190 C883 177 940 150 960 150 C980 150 1003 177 1000 190 C997 203 960 230 940 230 C920 230 877 203 880 190Z" fill="#87b779"/><path d="M280 180 C297 175 360 183 400 190 C440 197 515 212 520 220 C525 228 467 240 430 240 C393 240 325 230 300 220 C275 210 263 185 280 180Z" fill="#87b779"/><path d="M1380 140 C1387 78 1422 53 1430 130 C1438 207 1437 538 1430 600 C1423 662 1398 577 1390 500 C1382 423 1373 202 1380 140Z" fill="#87b779"/><path d="M30 700 C43 680 88 680 120 680 C152 680 193 687 220 700 C247 713 275 738 280 760 C285 782 277 815 250 830 C223 845 155 855 120 850 C85 845 55 825 40 800 C25 775 17 720 30 700Z" fill="#dfe4e8"/><path d="M380 660 C385 637 427 637 450 640 C473 643 502 660 520 680 C538 700 563 740 560 760 C557 780 523 797 500 800 C477 803 440 803 420 780 C400 757 375 683 380 660Z" fill="#dfe4e8"/><path d="M640 720 C643 703 700 693 720 700 C740 707 763 743 760 760 C757 777 720 807 700 800 C680 793 637 737 640 720Z" fill="#dfe4e8"/><path d="M900 580 C913 540 970 548 1000 560 C1030 572 1065 610 1080 650 C1095 690 1103 765 1090 800 C1077 835 1028 860 1000 860 C972 860 937 847 920 800 C903 753 887 620 900 580Z" fill="#dfe4e8"/><path d="M1150 460 C1162 437 1223 423 1250 430 C1277 437 1305 473 1310 500 C1315 527 1302 578 1280 590 C1258 602 1202 592 1180 570 C1158 548 1138 483 1150 460Z" fill="#dfe4e8"/><path d="M1260 430 C1268 410 1323 395 1350 400 C1377 405 1412 437 1420 460 C1428 483 1420 530 1400 540 C1380 550 1323 538 1300 520 C1277 502 1252 450 1260 430Z" fill="#dfe4e8"/><path d="M230 -10 C42 -2 275 25 300 40 C325 55 363 65 380 82 C397 99 391 123 400 140 C409 157 412 173 432 182 C452 191 498 196 520 192 C542 188 548 172 562 160 C576 148 577 126 602 122 C627 118 663 133 710 135 C757 137 835 146 885 135 C935 124 959 90 1010 70 C1061 50 1120 27 1190 15 C1260 3 1390 4 1430 0 C1470 -4 1630 -8 1430 -10 C1230 -12 418 -18 230 -10Z" fill="#5aa5c8"/><rect x="30" y="80" width="40" height="60" fill="#f4e5c6"/><rect x="80" y="200" width="50" height="40" fill="#f4e5c6"/><rect x="150" y="230" width="40" height="50" fill="#f4e5c6"/><rect x="30" y="260" width="40" height="40" fill="#f4e5c6"/><rect x="100" y="340" width="60" height="50" fill="#f4e5c6"/><rect x="220" y="300" width="50" height="40" fill="#f4e5c6"/><rect x="290" y="420" width="60" height="50" fill="#f4e5c6"/><rect x="330" y="480" width="40" height="60" fill="#f4e5c6"/><rect x="420" y="480" width="40" height="30" fill="#f4e5c6"/><rect x="590" y="150" width="80" height="70" fill="#f4e5c6"/><rect x="600" y="270" width="70" height="30" fill="#f4e5c6"/><rect x="700" y="280" width="60" height="30" fill="#f4e5c6"/><rect x="560" y="380" width="60" height="30" fill="#f4e5c6"/><rect x="650" y="390" width="60" height="30" fill="#f4e5c6"/><rect x="770" y="380" width="60" height="25" fill="#f4e5c6"/><rect x="850" y="400" width="50" height="30" fill="#f4e5c6"/><rect x="720" y="420" width="70" height="30" fill="#f4e5c6"/><rect x="620" y="440" width="80" height="25" fill="#f4e5c6"/><rect x="980" y="330" width="60" height="40" fill="#f4e5c6"/><rect x="1060" y="380" width="50" height="30" fill="#f4e5c6"/><rect x="1120" y="410" width="40" height="40" fill="#f4e5c6"/><rect x="1000" y="420" width="40" height="30" fill="#f4e5c6"/><rect x="1080" y="250" width="40" height="40" fill="#f4e5c6"/><rect x="600" y="560" width="50" height="40" fill="#f4e5c6"/><rect x="700" y="560" width="40" height="30" fill="#f4e5c6"/><rect x="790" y="590" width="40" height="30" fill="#f4e5c6"/><rect x="1200" y="360" width="50" height="30" fill="#f4e5c6"/><rect x="20" y="120" width="40" height="50" fill="#f4e5c6"/><rect x="60" y="160" width="40" height="30" fill="#f4e5c6"/><rect x="10" y="220" width="30" height="40" fill="#f4e5c6"/><rect x="880" y="300" width="50" height="30" fill="#f4e5c6"/><rect x="930" y="360" width="40" height="30" fill="#f4e5c6"/><rect x="780" y="320" width="50" height="30" fill="#f4e5c6"/><rect x="460" y="400" width="50" height="30" fill="#f4e5c6"/><rect x="1060" y="330" width="40" height="30" fill="#f4e5c6"/><rect x="1160" y="350" width="40" height="40" fill="#f4e5c6"/><rect x="1240" y="380" width="40" height="30" fill="#f4e5c6"/><path d="M20 400 C50 397 137 378 200 382 C263 386 325 404 400 422 C475 440 583 482 650 492 C717 502 750 490 800 482 C850 474 900 455 950 442 C1000 429 1050 417 1100 402 C1150 387 1195 372 1250 352 C1305 332 1400 294 1430 282" fill="none" stroke="#5b6272" stroke-width="6" stroke-linecap="round" stroke-linejoin="round"/><path d="M-10 560 C17 557 98 537 150 542 C202 547 250 585 300 592 C350 599 400 577 450 582 C500 587 558 625 600 622 C642 619 658 572 700 562 C742 552 825 562 850 562" fill="none" stroke="#5b6272" stroke-width="6" stroke-linecap="round" stroke-linejoin="round"/><path d="M400 640 C408 653 433 690 450 720 C467 750 475 794 500 822 C525 850 583 879 600 890" fill="none" stroke="#5b6272" stroke-width="6" stroke-linecap="round" stroke-linejoin="round"/><path d="M1060 300 C1067 320 1085 392 1100 420 C1115 448 1125 447 1150 470 C1175 493 1225 538 1250 560 C1275 582 1292 593 1300 600" fill="none" stroke="#5b6272" stroke-width="6" stroke-linecap="round" stroke-linejoin="round"/><path d="M1120 470 C1133 482 1177 515 1200 540 C1223 565 1233 593 1260 620 C1287 647 1343 687 1360 700" fill="none" stroke="#5b6272" stroke-width="6" stroke-linecap="round" stroke-linejoin="round"/><path d="M1060 640 C1067 653 1085 693 1100 720 C1115 747 1133 772 1150 800 C1167 828 1192 875 1200 890" fill="none" stroke="#5b6272" stroke-width="6" stroke-linecap="round" stroke-linejoin="round"/><path d="M1020 720 C1025 735 1033 782 1050 810 C1067 838 1108 877 1120 890" fill="none" stroke="#5b6272" stroke-width="6" stroke-linecap="round" stroke-linejoin="round"/><path d="M-10 660 C8 657 65 640 100 640 C135 640 183 657 200 660" fill="none" stroke="#5b6272" stroke-width="6" stroke-linecap="round" stroke-linejoin="round"/><path d="M620 690 C633 688 673 675 700 680 C727 685 757 707 780 720 C803 733 830 753 840 760" fill="none" stroke="#5b6272" stroke-width="6" stroke-linecap="round" stroke-linejoin="round"/><path d="M120 780 C133 773 170 738 200 740 C230 742 270 768 300 790 C330 812 367 857 380 870" fill="none" stroke="#5b6272" stroke-width="6" stroke-linecap="round" stroke-linejoin="round"/><path d="M1280 390 C1288 403 1310 448 1330 470 C1350 492 1388 512 1400 520" fill="none" stroke="#5b6272" stroke-width="6" stroke-linecap="round" stroke-linejoin="round"/><path d="M-10 110 C8 120 65 150 100 170 C135 190 167 213 200 230 C233 247 267 258 300 270 C333 282 358 295 400 300 C442 305 498 302 550 300 C602 298 658 297 710 290 C762 283 812 270 860 260 C908 250 977 235 1000 230" fill="none" stroke="#5b6272" stroke-width="6" stroke-linecap="round" stroke-linejoin="round"/><path d="M0 300 C25 305 100 317 150 330 C200 343 250 367 300 380 C350 393 400 402 450 410 C500 418 542 428 600 430 C658 432 742 428 800 420 C858 412 900 395 950 380 C1000 365 1050 347 1100 330 C1150 313 1195 302 1250 280 C1305 258 1400 213 1430 200" fill="none" stroke="#5b6272" stroke-width="6" stroke-linecap="round" stroke-linejoin="round"/><path d="M500 460 C533 470 633 510 700 520 C767 530 833 530 900 520 C967 510 1067 470 1100 460" fill="none" stroke="#5b6272" stroke-width="6" stroke-linecap="round" stroke-linejoin="round"/><path d="M250 450 C267 462 317 505 350 520 C383 535 408 537 450 540 C492 543 575 540 600 540" fill="none" stroke="#5b6272" stroke-width="6" stroke-linecap="round" stroke-linejoin="round"/><path d="M1310 420 C1318 443 1345 513 1360 560 C1375 607 1393 677 1400 700" fill="none" stroke="#5b6272" stroke-width="6" stroke-linecap="round" stroke-linejoin="round"/><path d="M880 240 C883 260 900 322 900 360 C900 398 883 452 880 470" fill="none" stroke="#5b6272" stroke-width="6" stroke-linecap="round" stroke-linejoin="round"/><path d="M40 59 L48 216" fill="none" stroke="#5b6272" stroke-width="6" stroke-linecap="round" stroke-linejoin="round"/><path d="M94 90 L107 243" fill="none" stroke="#5b6272" stroke-width="6" stroke-linecap="round" stroke-linejoin="round"/><path d="M180 140 L171 272" fill="none" stroke="#5b6272" stroke-width="6" stroke-linecap="round" stroke-linejoin="round"/><path d="M229 171 L251 309" fill="none" stroke="#5b6272" stroke-width="6" stroke-linecap="round" stroke-linejoin="round"/><path d="M280 202 L291 326" fill="none" stroke="#5b6272" stroke-width="6" stroke-linecap="round" stroke-linejoin="round"/><path d="M362 222 L353 348" fill="none" stroke="#5b6272" stroke-width="6" stroke-linecap="round" stroke-linejoin="round"/><path d="M439 235 L440 362" fill="none" stroke="#5b6272" stroke-width="6" stroke-linecap="round" stroke-linejoin="round"/><path d="M486 238 L479 365" fill="none" stroke="#5b6272" stroke-width="6" stroke-linecap="round" stroke-linejoin="round"/><path d="M558 241 L572 361" fill="none" stroke="#5b6272" stroke-width="6" stroke-linecap="round" stroke-linejoin="round"/><path d="M607 236 L610 358" fill="none" stroke="#5b6272" stroke-width="6" stroke-linecap="round" stroke-linejoin="round"/><path d="M657 231 L680 352" fill="none" stroke="#5b6272" stroke-width="6" stroke-linecap="round" stroke-linejoin="round"/><path d="M729 223 L720 347" fill="none" stroke="#5b6272" stroke-width="6" stroke-linecap="round" stroke-linejoin="round"/><path d="M810 215 L805 325" fill="none" stroke="#5b6272" stroke-width="6" stroke-linecap="round" stroke-linejoin="round"/><path d="M869 209 L894 296" fill="none" stroke="#5b6272" stroke-width="6" stroke-linecap="round" stroke-linejoin="round"/><path d="M917 201 L941 278" fill="none" stroke="#5b6272" stroke-width="6" stroke-linecap="round" stroke-linejoin="round"/><path d="M999 185 L1012 252" fill="none" stroke="#5b6272" stroke-width="6" stroke-linecap="round" stroke-linejoin="round"/><path d="M1047 157 L1049 239" fill="none" stroke="#5b6272" stroke-width="6" stroke-linecap="round" stroke-linejoin="round"/><path d="M1094 135 L1117 195" fill="none" stroke="#5b6272" stroke-width="6" stroke-linecap="round" stroke-linejoin="round"/><path d="M1147 112 L1153 170" fill="none" stroke="#5b6272" stroke-width="6" stroke-linecap="round" stroke-linejoin="round"/><path d="M430 361 L429 430" fill="none" stroke="#5b6272" stroke-width="6" stroke-linecap="round" stroke-linejoin="round"/><path d="M504 367 L501 450" fill="none" stroke="#5b6272" stroke-width="6" stroke-linecap="round" stroke-linejoin="round"/><path d="M580 361 L589 475" fill="none" stroke="#5b6272" stroke-width="6" stroke-linecap="round" stroke-linejoin="round"/><path d="M655 354 L656 492" fill="none" stroke="#5b6272" stroke-width="6" stroke-linecap="round" stroke-linejoin="round"/><path d="M701 351 L728 487" fill="none" stroke="#5b6272" stroke-width="6" stroke-linecap="round" stroke-linejoin="round"/><path d="M777 332 L807 480" fill="none" stroke="#5b6272" stroke-width="6" stroke-linecap="round" stroke-linejoin="round"/><path d="M829 318 L842 471" fill="none" stroke="#5b6272" stroke-width="6" stroke-linecap="round" stroke-linejoin="round"/><path d="M875 304 L900 455" fill="none" stroke="#5b6272" stroke-width="6" stroke-linecap="round" stroke-linejoin="round"/><path d="M960 270 L954 441" fill="none" stroke="#5b6272" stroke-width="6" stroke-linecap="round" stroke-linejoin="round"/><path d="M1036 243 L1029 421" fill="none" stroke="#5b6272" stroke-width="6" stroke-linecap="round" stroke-linejoin="round"/><path d="M1115 196 L1118 396" fill="none" stroke="#5b6272" stroke-width="6" stroke-linecap="round" stroke-linejoin="round"/><path d="M1186 160 L1210 365" fill="none" stroke="#5b6272" stroke-width="6" stroke-linecap="round" stroke-linejoin="round"/><path d="M-10 30 C17 45 102 93 150 122 C198 151 238 184 280 202 C322 220 355 225 400 232 C445 239 498 243 550 242 C602 241 658 230 710 225 C762 220 813 216 860 210 C907 204 957 200 990 190 C1023 180 1023 168 1060 150 C1097 132 1148 103 1210 85 C1272 67 1393 48 1430 40" fill="none" stroke="#4c5364" stroke-width="17" stroke-linecap="round" stroke-linejoin="round"/><path d="M-10 190 C17 202 102 240 150 262 C198 284 242 306 280 322 C318 338 343 350 380 357 C417 364 445 368 500 367 C555 366 650 360 710 350 C770 340 818 323 860 310 C902 297 927 282 960 270 C993 258 1027 252 1060 235 C1093 218 1131 179 1160 165 C1189 151 1190 158 1235 150 C1280 142 1398 125 1430 120" fill="none" stroke="#4c5364" stroke-width="17" stroke-linecap="round" stroke-linejoin="round"/><path d="M480 372 C487 388 483 452 520 470 C557 488 637 483 700 482 C763 481 850 487 900 462 C950 437 983 354 1000 332" fill="none" stroke="#4c5364" stroke-width="17" stroke-linecap="round" stroke-linejoin="round"/><path d="M960 380 C957 400 950 467 940 500 C930 533 905 547 902 580 C899 613 914 648 920 700 C926 752 937 858 940 890" fill="none" stroke="#4c5364" stroke-width="17" stroke-linecap="round" stroke-linejoin="round"/><path d="M1025 -10 L1040 165" fill="none" stroke="#4c5364" stroke-width="17" stroke-linecap="round" stroke-linejoin="round"/><path d="M1160 190 C1168 217 1198 319 1210 350 C1222 381 1218 365 1235 375 C1252 385 1278 396 1310 410 C1342 424 1410 452 1430 460" fill="none" stroke="#4c5364" stroke-width="17" stroke-linecap="round" stroke-linejoin="round"/><path d="M10 50 C28 62 95 118 120 120 C145 122 153 70 160 60" fill="none" stroke="#4c5364" stroke-width="17" stroke-linecap="round" stroke-linejoin="round"/><path d="M560 240 C570 233 597 210 620 200 C643 190 670 180 700 180 C730 180 770 200 800 200 C830 200 848 182 880 180 C912 178 972 188 990 190" fill="none" stroke="#4c5364" stroke-width="17" stroke-linecap="round" stroke-linejoin="round"/><path d="M600 -10 C594 25 582 143 562 200 C542 257 512 298 482 332 C452 366 412 377 382 402 C352 427 325 455 302 482 C279 509 252 534 242 562 C232 590 232 620 242 652 C252 684 279 712 302 752 C325 792 369 867 382 890" fill="none" stroke="#f5b829" stroke-width="5" stroke-linecap="round" stroke-linejoin="round"/><path d="M30 262 C58 272 138 295 200 322 C262 349 333 402 400 422 C467 442 533 442 600 442 C667 442 733 437 800 422 C867 407 933 372 1000 352 C1067 332 1128 322 1200 302 C1272 282 1392 244 1430 232" fill="none" stroke="#f5b829" stroke-width="5" stroke-linecap="round" stroke-linejoin="round"/><circle cx="60" cy="478" r="10" fill="#e25577" opacity="0.85"/><rect x="75" y="472" width="110" height="13" fill="#e26a85" opacity="0.45"/><circle cx="435" cy="578" r="10" fill="#e25577" opacity="0.85"/><rect x="450" y="572" width="110" height="13" fill="#e26a85" opacity="0.45"/><circle cx="1130" cy="585" r="10" fill="#e25577" opacity="0.85"/><rect x="1145" y="579" width="110" height="13" fill="#e26a85" opacity="0.45"/><circle cx="488" cy="838" r="10" fill="#e25577" opacity="0.85"/><rect x="503" y="832" width="110" height="13" fill="#e26a85" opacity="0.45"/><circle cx="680" cy="142" r="10" fill="#e25577" opacity="0.85"/><rect x="695" y="136" width="110" height="13" fill="#e26a85" opacity="0.45"/><circle cx="195" cy="70" r="10" fill="#e25577" opacity="0.85"/><rect x="210" y="64" width="110" height="13" fill="#e26a85" opacity="0.45"/><circle cx="760" cy="830" r="10" fill="#e25577" opacity="0.85"/><rect x="775" y="824" width="110" height="13" fill="#e26a85" opacity="0.45"/><circle cx="20" cy="752" r="10" fill="#e25577" opacity="0.85"/><rect x="35" y="746" width="110" height="13" fill="#e26a85" opacity="0.45"/><circle cx="305" cy="305" r="13" fill="#d63ec8"/><rect x="325" y="297" width="170" height="16" fill="#d050c0" opacity="0.6"/></svg><div class="newb"><span>NEW</span></div></div>
 <div class="thumb" style="left:915.6px;top:137px;width:249px;height:153.5px"><svg style="position:absolute;left:-2.6px;top:-2px" width="254" height="158" viewBox="0 0 1421 884" preserveAspectRatio="none"><rect width="1421" height="884" fill="#eef1f3"/><path d="M-10 560 C8 512 57 595 100 600 C143 605 212 597 250 590 C288 583 305 568 330 560 C355 552 372 533 400 540 C428 547 467 583 500 600 C533 617 567 637 600 640 C633 643 667 610 700 620 C733 630 770 677 800 700 C830 723 863 728 880 760 C897 792 1048 868 900 890 C752 912 142 945 -10 890 C-162 835 -28 608 -10 560Z" fill="#e4e8eb"/><path d="M1140 620 C1157 592 1202 593 1250 580 C1298 567 1400 488 1430 540 C1460 592 1468 832 1430 890 C1392 948 1247 913 1200 890 C1153 867 1160 795 1150 750 C1140 705 1123 648 1140 620Z" fill="#e4e8eb"/><path d="M30 700 C43 680 88 680 120 680 C152 680 193 687 220 700 C247 713 275 738 280 760 C285 782 277 815 250 830 C223 845 155 855 120 850 C85 845 55 825 40 800 C25 775 17 720 30 700Z" fill="#eef1f3"/><path d="M380 660 C385 637 427 637 450 640 C473 643 502 660 520 680 C538 700 563 740 560 760 C557 780 523 797 500 800 C477 803 440 803 420 780 C400 757 375 683 380 660Z" fill="#eef1f3"/><path d="M640 720 C643 703 700 693 720 700 C740 707 763 743 760 760 C757 777 720 807 700 800 C680 793 637 737 640 720Z" fill="#eef1f3"/><path d="M900 580 C913 540 970 548 1000 560 C1030 572 1065 610 1080 650 C1095 690 1103 765 1090 800 C1077 835 1028 860 1000 860 C972 860 937 847 920 800 C903 753 887 620 900 580Z" fill="#eef1f3"/><path d="M1150 460 C1162 437 1223 423 1250 430 C1277 437 1305 473 1310 500 C1315 527 1302 578 1280 590 C1258 602 1202 592 1180 570 C1158 548 1138 483 1150 460Z" fill="#eef1f3"/><path d="M1260 430 C1268 410 1323 395 1350 400 C1377 405 1412 437 1420 460 C1428 483 1420 530 1400 540 C1380 550 1323 538 1300 520 C1277 502 1252 450 1260 430Z" fill="#eef1f3"/><path d="M300 -10 C152 -3 317 15 330 30 C343 45 367 60 380 80 C393 100 402 129 410 150 C418 171 412 194 430 205 C448 216 495 218 520 215 C545 212 563 199 580 185 C597 171 600 141 620 130 C640 119 670 118 700 120 C730 122 767 137 800 140 C833 143 867 145 900 140 C933 135 967 120 1000 110 C1033 100 1067 92 1100 80 C1133 68 1180 55 1200 40 C1220 25 1370 -2 1220 -10 C1070 -18 448 -17 300 -10Z" fill="#d0d7da"/><path d="M20 400 C50 397 137 378 200 382 C263 386 325 404 400 422 C475 440 583 482 650 492 C717 502 750 490 800 482 C850 474 900 455 950 442 C1000 429 1050 417 1100 402 C1150 387 1195 372 1250 352 C1305 332 1400 294 1430 282" fill="none" stroke="#a4aab2" stroke-width="6" stroke-linecap="round" stroke-linejoin="round"/><path d="M-10 560 C17 557 98 537 150 542 C202 547 250 585 300 592 C350 599 400 577 450 582 C500 587 558 625 600 622 C642 619 658 572 700 562 C742 552 825 562 850 562" fill="none" stroke="#a4aab2" stroke-width="6" stroke-linecap="round" stroke-linejoin="round"/><path d="M400 640 C408 653 433 690 450 720 C467 750 475 794 500 822 C525 850 583 879 600 890" fill="none" stroke="#a4aab2" stroke-width="6" stroke-linecap="round" stroke-linejoin="round"/><path d="M1060 300 C1067 320 1085 392 1100 420 C1115 448 1125 447 1150 470 C1175 493 1225 538 1250 560 C1275 582 1292 593 1300 600" fill="none" stroke="#a4aab2" stroke-width="6" stroke-linecap="round" stroke-linejoin="round"/><path d="M1120 470 C1133 482 1177 515 1200 540 C1223 565 1233 593 1260 620 C1287 647 1343 687 1360 700" fill="none" stroke="#a4aab2" stroke-width="6" stroke-linecap="round" stroke-linejoin="round"/><path d="M1060 640 C1067 653 1085 693 1100 720 C1115 747 1133 772 1150 800 C1167 828 1192 875 1200 890" fill="none" stroke="#a4aab2" stroke-width="6" stroke-linecap="round" stroke-linejoin="round"/><path d="M1020 720 C1025 735 1033 782 1050 810 C1067 838 1108 877 1120 890" fill="none" stroke="#a4aab2" stroke-width="6" stroke-linecap="round" stroke-linejoin="round"/><path d="M-10 660 C8 657 65 640 100 640 C135 640 183 657 200 660" fill="none" stroke="#a4aab2" stroke-width="6" stroke-linecap="round" stroke-linejoin="round"/><path d="M620 690 C633 688 673 675 700 680 C727 685 757 707 780 720 C803 733 830 753 840 760" fill="none" stroke="#a4aab2" stroke-width="6" stroke-linecap="round" stroke-linejoin="round"/><path d="M120 780 C133 773 170 738 200 740 C230 742 270 768 300 790 C330 812 367 857 380 870" fill="none" stroke="#a4aab2" stroke-width="6" stroke-linecap="round" stroke-linejoin="round"/><path d="M1280 390 C1288 403 1310 448 1330 470 C1350 492 1388 512 1400 520" fill="none" stroke="#a4aab2" stroke-width="6" stroke-linecap="round" stroke-linejoin="round"/><path d="M-10 110 C8 120 65 150 100 170 C135 190 167 213 200 230 C233 247 267 258 300 270 C333 282 358 295 400 300 C442 305 498 302 550 300 C602 298 658 297 710 290 C762 283 812 270 860 260 C908 250 977 235 1000 230" fill="none" stroke="#a4aab2" stroke-width="6" stroke-linecap="round" stroke-linejoin="round"/><path d="M0 300 C25 305 100 317 150 330 C200 343 250 367 300 380 C350 393 400 402 450 410 C500 418 542 428 600 430 C658 432 742 428 800 420 C858 412 900 395 950 380 C1000 365 1050 347 1100 330 C1150 313 1195 302 1250 280 C1305 258 1400 213 1430 200" fill="none" stroke="#a4aab2" stroke-width="6" stroke-linecap="round" stroke-linejoin="round"/><path d="M500 460 C533 470 633 510 700 520 C767 530 833 530 900 520 C967 510 1067 470 1100 460" fill="none" stroke="#a4aab2" stroke-width="6" stroke-linecap="round" stroke-linejoin="round"/><path d="M250 450 C267 462 317 505 350 520 C383 535 408 537 450 540 C492 543 575 540 600 540" fill="none" stroke="#a4aab2" stroke-width="6" stroke-linecap="round" stroke-linejoin="round"/><path d="M1310 420 C1318 443 1345 513 1360 560 C1375 607 1393 677 1400 700" fill="none" stroke="#a4aab2" stroke-width="6" stroke-linecap="round" stroke-linejoin="round"/><path d="M880 240 C883 260 900 322 900 360 C900 398 883 452 880 470" fill="none" stroke="#a4aab2" stroke-width="6" stroke-linecap="round" stroke-linejoin="round"/><path d="M40 59 L48 216" fill="none" stroke="#a4aab2" stroke-width="6" stroke-linecap="round" stroke-linejoin="round"/><path d="M94 90 L107 243" fill="none" stroke="#a4aab2" stroke-width="6" stroke-linecap="round" stroke-linejoin="round"/><path d="M180 140 L171 272" fill="none" stroke="#a4aab2" stroke-width="6" stroke-linecap="round" stroke-linejoin="round"/><path d="M229 171 L251 309" fill="none" stroke="#a4aab2" stroke-width="6" stroke-linecap="round" stroke-linejoin="round"/><path d="M280 202 L291 326" fill="none" stroke="#a4aab2" stroke-width="6" stroke-linecap="round" stroke-linejoin="round"/><path d="M362 222 L353 348" fill="none" stroke="#a4aab2" stroke-width="6" stroke-linecap="round" stroke-linejoin="round"/><path d="M439 235 L440 362" fill="none" stroke="#a4aab2" stroke-width="6" stroke-linecap="round" stroke-linejoin="round"/><path d="M486 238 L479 365" fill="none" stroke="#a4aab2" stroke-width="6" stroke-linecap="round" stroke-linejoin="round"/><path d="M558 241 L572 361" fill="none" stroke="#a4aab2" stroke-width="6" stroke-linecap="round" stroke-linejoin="round"/><path d="M607 236 L610 358" fill="none" stroke="#a4aab2" stroke-width="6" stroke-linecap="round" stroke-linejoin="round"/><path d="M657 231 L680 352" fill="none" stroke="#a4aab2" stroke-width="6" stroke-linecap="round" stroke-linejoin="round"/><path d="M729 223 L720 347" fill="none" stroke="#a4aab2" stroke-width="6" stroke-linecap="round" stroke-linejoin="round"/><path d="M810 215 L805 325" fill="none" stroke="#a4aab2" stroke-width="6" stroke-linecap="round" stroke-linejoin="round"/><path d="M869 209 L894 296" fill="none" stroke="#a4aab2" stroke-width="6" stroke-linecap="round" stroke-linejoin="round"/><path d="M917 201 L941 278" fill="none" stroke="#a4aab2" stroke-width="6" stroke-linecap="round" stroke-linejoin="round"/><path d="M999 185 L1012 252" fill="none" stroke="#a4aab2" stroke-width="6" stroke-linecap="round" stroke-linejoin="round"/><path d="M1047 157 L1049 239" fill="none" stroke="#a4aab2" stroke-width="6" stroke-linecap="round" stroke-linejoin="round"/><path d="M1094 135 L1117 195" fill="none" stroke="#a4aab2" stroke-width="6" stroke-linecap="round" stroke-linejoin="round"/><path d="M1147 112 L1153 170" fill="none" stroke="#a4aab2" stroke-width="6" stroke-linecap="round" stroke-linejoin="round"/><path d="M430 361 L429 430" fill="none" stroke="#a4aab2" stroke-width="6" stroke-linecap="round" stroke-linejoin="round"/><path d="M504 367 L501 450" fill="none" stroke="#a4aab2" stroke-width="6" stroke-linecap="round" stroke-linejoin="round"/><path d="M580 361 L589 475" fill="none" stroke="#a4aab2" stroke-width="6" stroke-linecap="round" stroke-linejoin="round"/><path d="M655 354 L656 492" fill="none" stroke="#a4aab2" stroke-width="6" stroke-linecap="round" stroke-linejoin="round"/><path d="M701 351 L728 487" fill="none" stroke="#a4aab2" stroke-width="6" stroke-linecap="round" stroke-linejoin="round"/><path d="M777 332 L807 480" fill="none" stroke="#a4aab2" stroke-width="6" stroke-linecap="round" stroke-linejoin="round"/><path d="M829 318 L842 471" fill="none" stroke="#a4aab2" stroke-width="6" stroke-linecap="round" stroke-linejoin="round"/><path d="M875 304 L900 455" fill="none" stroke="#a4aab2" stroke-width="6" stroke-linecap="round" stroke-linejoin="round"/><path d="M960 270 L954 441" fill="none" stroke="#a4aab2" stroke-width="6" stroke-linecap="round" stroke-linejoin="round"/><path d="M1036 243 L1029 421" fill="none" stroke="#a4aab2" stroke-width="6" stroke-linecap="round" stroke-linejoin="round"/><path d="M1115 196 L1118 396" fill="none" stroke="#a4aab2" stroke-width="6" stroke-linecap="round" stroke-linejoin="round"/><path d="M1186 160 L1210 365" fill="none" stroke="#a4aab2" stroke-width="6" stroke-linecap="round" stroke-linejoin="round"/><path d="M30 520 C58 517 145 490 200 500 C255 510 313 570 360 580 C407 590 440 557 480 560 C520 563 553 590 600 600 C647 610 713 622 760 620 C807 618 860 595 880 590" fill="none" stroke="#a9aeb6" stroke-width="6" stroke-linecap="round" stroke-linejoin="round"/><path d="M20 680 C37 677 82 653 120 660 C158 667 212 703 250 720 C288 737 317 750 350 760 C383 770 420 762 450 780 C480 798 517 855 530 870" fill="none" stroke="#a9aeb6" stroke-width="6" stroke-linecap="round" stroke-linejoin="round"/><path d="M700 720 C708 733 730 777 750 800 C770 823 808 850 820 860" fill="none" stroke="#a9aeb6" stroke-width="6" stroke-linecap="round" stroke-linejoin="round"/><path d="M820 610 C828 625 857 657 870 700 C883 743 895 842 900 870" fill="none" stroke="#a9aeb6" stroke-width="6" stroke-linecap="round" stroke-linejoin="round"/><path d="M1060 500 C1067 510 1087 537 1100 560 C1113 583 1132 613 1140 640 C1148 667 1143 682 1150 720 C1157 758 1175 845 1180 870" fill="none" stroke="#a9aeb6" stroke-width="6" stroke-linecap="round" stroke-linejoin="round"/><path d="M580 640 C590 650 620 680 640 700 C660 720 680 732 700 760 C720 788 750 852 760 870" fill="none" stroke="#a9aeb6" stroke-width="6" stroke-linecap="round" stroke-linejoin="round"/><path d="M100 560 C113 570 155 613 180 620 C205 627 225 595 250 600 C275 605 317 642 330 650" fill="none" stroke="#a9aeb6" stroke-width="6" stroke-linecap="round" stroke-linejoin="round"/><path d="M1200 480 C1210 493 1240 537 1260 560 C1280 583 1297 600 1320 620 C1343 640 1387 670 1400 680" fill="none" stroke="#a9aeb6" stroke-width="6" stroke-linecap="round" stroke-linejoin="round"/><path d="M1100 760 C1117 767 1167 782 1200 800 C1233 818 1283 858 1300 870" fill="none" stroke="#a9aeb6" stroke-width="6" stroke-linecap="round" stroke-linejoin="round"/><path d="M-10 30 C17 45 102 93 150 122 C198 151 238 184 280 202 C322 220 355 225 400 232 C445 239 498 243 550 242 C602 241 658 230 710 225 C762 220 813 216 860 210 C907 204 957 200 990 190 C1023 180 1023 168 1060 150 C1097 132 1148 103 1210 85 C1272 67 1393 48 1430 40" fill="none" stroke="#a3a9b2" stroke-width="13" stroke-linecap="round" stroke-linejoin="round"/><path d="M-10 190 C17 202 102 240 150 262 C198 284 242 306 280 322 C318 338 343 350 380 357 C417 364 445 368 500 367 C555 366 650 360 710 350 C770 340 818 323 860 310 C902 297 927 282 960 270 C993 258 1027 252 1060 235 C1093 218 1131 179 1160 165 C1189 151 1190 158 1235 150 C1280 142 1398 125 1430 120" fill="none" stroke="#a3a9b2" stroke-width="13" stroke-linecap="round" stroke-linejoin="round"/><path d="M480 372 C487 388 483 452 520 470 C557 488 637 483 700 482 C763 481 850 487 900 462 C950 437 983 354 1000 332" fill="none" stroke="#a3a9b2" stroke-width="13" stroke-linecap="round" stroke-linejoin="round"/><path d="M960 380 C957 400 950 467 940 500 C930 533 905 547 902 580 C899 613 914 648 920 700 C926 752 937 858 940 890" fill="none" stroke="#a3a9b2" stroke-width="13" stroke-linecap="round" stroke-linejoin="round"/><path d="M1025 -10 L1040 165" fill="none" stroke="#a3a9b2" stroke-width="13" stroke-linecap="round" stroke-linejoin="round"/><path d="M1160 190 C1168 217 1198 319 1210 350 C1222 381 1218 365 1235 375 C1252 385 1278 396 1310 410 C1342 424 1410 452 1430 460" fill="none" stroke="#a3a9b2" stroke-width="13" stroke-linecap="round" stroke-linejoin="round"/><path d="M10 50 C28 62 95 118 120 120 C145 122 153 70 160 60" fill="none" stroke="#a3a9b2" stroke-width="13" stroke-linecap="round" stroke-linejoin="round"/><path d="M560 240 C570 233 597 210 620 200 C643 190 670 180 700 180 C730 180 770 200 800 200 C830 200 848 182 880 180 C912 178 972 188 990 190" fill="none" stroke="#a3a9b2" stroke-width="13" stroke-linecap="round" stroke-linejoin="round"/><path d="M600 -10 C594 25 582 143 562 200 C542 257 512 298 482 332 C452 366 412 377 382 402 C352 427 325 455 302 482 C279 509 252 534 242 562 C232 590 232 620 242 652 C252 684 279 712 302 752 C325 792 369 867 382 890" fill="none" stroke="#6e747c" stroke-width="3" stroke-linecap="round" stroke-linejoin="round"/><rect x="140" y="30" width="250" height="12" fill="#b8bdc4" opacity="0.45"/><rect x="730" y="160" width="160" height="12" fill="#b8bdc4" opacity="0.45"/><rect x="380" y="215" width="90" height="12" fill="#b8bdc4" opacity="0.45"/><rect x="350" y="335" width="150" height="12" fill="#b8bdc4" opacity="0.45"/><rect x="560" y="410" width="110" height="12" fill="#b8bdc4" opacity="0.45"/><rect x="310" y="455" width="180" height="12" fill="#b8bdc4" opacity="0.45"/><rect x="80" y="515" width="120" height="12" fill="#b8bdc4" opacity="0.45"/><rect x="20" y="630" width="100" height="12" fill="#b8bdc4" opacity="0.45"/><rect x="250" y="630" width="90" height="12" fill="#b8bdc4" opacity="0.45"/><rect x="480" y="620" width="120" height="12" fill="#b8bdc4" opacity="0.45"/><rect x="700" y="735" width="100" height="12" fill="#b8bdc4" opacity="0.45"/><rect x="270" y="745" width="110" height="12" fill="#b8bdc4" opacity="0.45"/><rect x="40" y="800" width="120" height="12" fill="#b8bdc4" opacity="0.45"/><rect x="1020" y="495" width="140" height="12" fill="#b8bdc4" opacity="0.45"/><rect x="1200" y="630" width="80" height="12" fill="#b8bdc4" opacity="0.45"/><rect x="1180" y="745" width="70" height="12" fill="#b8bdc4" opacity="0.45"/><rect x="1130" y="830" width="80" height="12" fill="#b8bdc4" opacity="0.45"/><rect x="1340" y="270" width="60" height="12" fill="#b8bdc4" opacity="0.45"/><rect x="1100" y="360" width="60" height="12" fill="#b8bdc4" opacity="0.45"/></svg><div class="newb"><span>NEW</span></div></div>
 <div class="thumb" style="left:1180.8px;top:137px;width:249px;height:153.5px"><svg style="position:absolute;left:-2.8px;top:-2px" width="254" height="158" viewBox="0 0 1421 884" preserveAspectRatio="none"><rect width="1421" height="884" fill="#eef2f8"/><path d="M-10 700 C5 667 45 687 80 690 C115 693 163 708 200 720 C237 732 263 747 300 760 C337 773 395 778 420 800 C445 822 522 875 450 890 C378 905 67 922 -10 890 C-87 858 -25 733 -10 700Z" fill="#9fd59b"/><path d="M-10 420 C5 395 48 432 80 440 C112 448 155 453 180 470 C205 487 227 518 230 540 C233 562 222 588 200 600 C178 612 135 612 100 610 C65 608 8 622 -10 590 C-28 558 -25 445 -10 420Z" fill="#9fd59b"/><path d="M340 620 C365 588 417 567 450 570 C483 573 515 618 540 640 C565 662 573 677 600 700 C627 723 680 748 700 780 C720 812 790 872 720 890 C650 908 350 912 280 890 C210 868 290 805 300 760 C310 715 315 652 340 620Z" fill="#9fd59b"/><path d="M920 720 C945 688 1007 687 1030 700 C1053 713 1057 768 1060 800 C1063 832 1080 875 1050 890 C1020 905 902 918 880 890 C858 862 895 752 920 720Z" fill="#9fd59b"/><path d="M1210 582 C1217 571 1243 564 1260 567 C1277 570 1299 581 1310 602 C1321 623 1325 672 1325 692 C1325 712 1321 724 1310 722 C1299 720 1275 697 1260 682 C1245 667 1228 649 1220 632 C1212 615 1203 593 1210 582Z" fill="#9fd59b"/><path d="M1345 822 C1352 807 1369 799 1380 800 C1391 801 1406 815 1410 830 C1414 845 1417 880 1405 890 C1393 900 1350 901 1340 890 C1330 879 1338 837 1345 822Z" fill="#9fd59b"/><path d="M710 832 C727 820 765 814 800 815 C835 816 900 828 920 840 C940 852 957 882 920 890 C883 898 735 900 700 890 C665 880 693 844 710 832Z" fill="#9fd59b"/><path d="M1040 642 C1045 635 1065 634 1070 640 C1075 646 1077 670 1072 677 C1067 684 1047 686 1042 680 C1037 674 1035 649 1040 642Z" fill="#9fd59b"/><path d="M140 110 C145 98 187 93 200 100 C213 107 225 138 220 150 C215 162 183 177 170 170 C157 163 135 122 140 110Z" fill="#9fd59b"/><path d="M690 170 C700 157 745 145 760 150 C775 155 790 187 780 200 C770 213 715 235 700 230 C685 225 680 183 690 170Z" fill="#9fd59b"/><path d="M280 240 C297 235 360 250 400 260 C440 270 520 293 520 300 C520 307 437 302 400 300 C363 298 320 300 300 290 C280 280 263 245 280 240Z" fill="#9fd59b"/><path d="M330 300 C340 285 382 290 390 310 C398 330 390 405 380 420 C370 435 338 420 330 400 C322 380 320 315 330 300Z" fill="#9fd59b"/><path d="M1040 240 C1043 227 1077 200 1100 190 C1123 180 1167 168 1180 180 C1193 192 1197 245 1180 260 C1163 275 1103 273 1080 270 C1057 267 1037 253 1040 240Z" fill="#9fd59b"/><path d="M860 600 C865 585 892 577 900 590 C908 603 915 665 910 680 C905 695 878 693 870 680 C862 667 855 615 860 600Z" fill="#9fd59b"/><path d="M0 180 C7 168 47 187 60 200 C73 213 87 248 80 260 C73 272 33 283 20 270 C7 257 -7 192 0 180Z" fill="#9fd59b"/><path d="M1340 200 C1350 183 1405 167 1420 180 C1435 193 1440 263 1430 280 C1420 297 1375 293 1360 280 C1345 267 1330 217 1340 200Z" fill="#9fd59b"/><path d="M240 -10 C86 -2 273 23 300 40 C327 57 376 73 400 92 C424 111 432 131 442 152 C452 173 442 204 462 217 C482 230 535 233 562 232 C589 231 607 222 622 212 C637 202 639 182 652 172 C665 162 680 154 702 152 C724 150 749 159 782 162 C815 165 865 172 902 172 C939 172 969 169 1002 162 C1035 155 1072 142 1102 132 C1132 122 1162 112 1182 102 C1202 92 1215 91 1222 72 C1229 53 1386 4 1222 -10 C1058 -24 394 -18 240 -10Z" fill="#7fb4de"/><rect x="690" y="330" width="90" height="50" fill="#dbeaf8"/><rect x="620" y="460" width="70" height="40" fill="#dbeaf8"/><rect x="700" y="470" width="60" height="40" fill="#dbeaf8"/><rect x="820" y="400" width="70" height="40" fill="#dbeaf8"/><rect x="900" y="470" width="80" height="30" fill="#dbeaf8"/><rect x="1000" y="420" width="60" height="40" fill="#dbeaf8"/><rect x="1150" y="420" width="60" height="50" fill="#dbeaf8"/><rect x="1260" y="440" width="80" height="40" fill="#dbeaf8"/><rect x="840" y="560" width="60" height="30" fill="#dbeaf8"/><rect x="40" y="390" width="60" height="40" fill="#dbeaf8"/><rect x="120" y="430" width="40" height="40" fill="#dbeaf8"/><rect x="600" y="560" width="50" height="40" fill="#dbeaf8"/><rect x="460" y="560" width="40" height="40" fill="#dbeaf8"/><rect x="300" y="520" width="60" height="50" fill="#dbeaf8"/><rect x="1300" y="340" width="60" height="40" fill="#dbeaf8"/><rect x="700" y="220" width="70" height="40" fill="#dbeaf8"/><path d="M20 140 C42 152 103 192 150 212 C197 232 250 249 300 262 C350 275 425 287 450 292" fill="none" stroke="#f7bd4f" stroke-width="9" stroke-linecap="round" stroke-linejoin="round"/><path d="M-10 270 C12 275 75 288 120 302 C165 316 213 334 260 352 C307 370 377 402 400 412" fill="none" stroke="#f7bd4f" stroke-width="9" stroke-linecap="round" stroke-linejoin="round"/><path d="M20 550 C42 543 112 523 150 510 C188 497 208 468 250 470 C292 472 358 505 400 520 C442 535 458 547 500 560 C542 573 600 595 650 600 C700 605 750 597 800 590 C850 583 900 570 950 560 C1000 550 1075 535 1100 530" fill="none" stroke="#f7bd4f" stroke-width="9" stroke-linecap="round" stroke-linejoin="round"/><path d="M-10 640 C8 633 65 603 100 600 C135 597 167 607 200 620 C233 633 267 667 300 680 C333 693 367 690 400 700 C433 710 483 733 500 740" fill="none" stroke="#f7bd4f" stroke-width="9" stroke-linecap="round" stroke-linejoin="round"/><path d="M500 470 C533 485 642 535 700 560 C758 585 800 607 850 620 C900 633 958 640 1000 640 C1042 640 1083 623 1100 620" fill="none" stroke="#f7bd4f" stroke-width="9" stroke-linecap="round" stroke-linejoin="round"/><path d="M520 450 L520 560" fill="none" stroke="#f7bd4f" stroke-width="9" stroke-linecap="round" stroke-linejoin="round"/><path d="M600 440 L610 600" fill="none" stroke="#f7bd4f" stroke-width="9" stroke-linecap="round" stroke-linejoin="round"/><path d="M660 450 L660 600" fill="none" stroke="#f7bd4f" stroke-width="9" stroke-linecap="round" stroke-linejoin="round"/><path d="M740 440 L740 600" fill="none" stroke="#f7bd4f" stroke-width="9" stroke-linecap="round" stroke-linejoin="round"/><path d="M820 420 L830 590" fill="none" stroke="#f7bd4f" stroke-width="9" stroke-linecap="round" stroke-linejoin="round"/><path d="M900 420 L910 570" fill="none" stroke="#f7bd4f" stroke-width="9" stroke-linecap="round" stroke-linejoin="round"/><path d="M980 380 L990 560" fill="none" stroke="#f7bd4f" stroke-width="9" stroke-linecap="round" stroke-linejoin="round"/><path d="M1060 350 L1080 540" fill="none" stroke="#f7bd4f" stroke-width="9" stroke-linecap="round" stroke-linejoin="round"/><path d="M530 500 L1000 480" fill="none" stroke="#f7bd4f" stroke-width="9" stroke-linecap="round" stroke-linejoin="round"/><path d="M530 540 L1000 520" fill="none" stroke="#f7bd4f" stroke-width="9" stroke-linecap="round" stroke-linejoin="round"/><path d="M540 580 L1000 560" fill="none" stroke="#f7bd4f" stroke-width="9" stroke-linecap="round" stroke-linejoin="round"/><path d="M200 140 C203 157 213 208 220 240 C227 272 240 300 240 330 C240 360 223 405 220 420" fill="none" stroke="#f7bd4f" stroke-width="9" stroke-linecap="round" stroke-linejoin="round"/><path d="M130 200 C128 222 123 288 120 330 C117 372 112 430 110 450" fill="none" stroke="#f7bd4f" stroke-width="9" stroke-linecap="round" stroke-linejoin="round"/><path d="M320 270 L330 400" fill="none" stroke="#f7bd4f" stroke-width="9" stroke-linecap="round" stroke-linejoin="round"/><path d="M430 280 L440 420" fill="none" stroke="#f7bd4f" stroke-width="9" stroke-linecap="round" stroke-linejoin="round"/><path d="M510 300 L500 440" fill="none" stroke="#f7bd4f" stroke-width="9" stroke-linecap="round" stroke-linejoin="round"/><path d="M790 210 C792 225 798 262 800 300 C802 338 800 417 800 440" fill="none" stroke="#f7bd4f" stroke-width="9" stroke-linecap="round" stroke-linejoin="round"/><path d="M700 300 L700 450" fill="none" stroke="#f7bd4f" stroke-width="9" stroke-linecap="round" stroke-linejoin="round"/><path d="M920 290 L930 420" fill="none" stroke="#f7bd4f" stroke-width="9" stroke-linecap="round" stroke-linejoin="round"/><path d="M990 270 L1010 380" fill="none" stroke="#f7bd4f" stroke-width="9" stroke-linecap="round" stroke-linejoin="round"/><path d="M1180 380 C1187 400 1207 463 1220 500 C1233 537 1247 567 1260 600 C1273 633 1287 667 1300 700 C1313 733 1327 768 1340 800 C1353 832 1373 875 1380 890" fill="none" stroke="#f7bd4f" stroke-width="9" stroke-linecap="round" stroke-linejoin="round"/><path d="M1080 560 C1088 573 1110 607 1130 640 C1150 673 1180 718 1200 760 C1220 802 1242 868 1250 890" fill="none" stroke="#f7bd4f" stroke-width="9" stroke-linecap="round" stroke-linejoin="round"/><path d="M1250 300 C1258 317 1278 372 1300 400 C1322 428 1367 458 1380 470" fill="none" stroke="#f7bd4f" stroke-width="9" stroke-linecap="round" stroke-linejoin="round"/><path d="M1200 420 L1430 420" fill="none" stroke="#f7bd4f" stroke-width="9" stroke-linecap="round" stroke-linejoin="round"/><path d="M1150 500 L1430 500" fill="none" stroke="#f7bd4f" stroke-width="9" stroke-linecap="round" stroke-linejoin="round"/><path d="M600 610 C617 622 658 667 700 680 C742 693 808 693 850 690 C892 687 933 665 950 660" fill="none" stroke="#f7bd4f" stroke-width="9" stroke-linecap="round" stroke-linejoin="round"/><path d="M150 720 C167 730 217 762 250 780 C283 798 333 822 350 830" fill="none" stroke="#f7bd4f" stroke-width="9" stroke-linecap="round" stroke-linejoin="round"/><path d="M240 600 C243 610 250 647 260 660 C270 673 293 677 300 680" fill="none" stroke="#f7bd4f" stroke-width="9" stroke-linecap="round" stroke-linejoin="round"/><path d="M20 20 C37 30 107 57 120 80 C133 103 103 147 100 160" fill="none" stroke="#f7bd4f" stroke-width="9" stroke-linecap="round" stroke-linejoin="round"/><path d="M1000 640 C992 650 957 673 950 700 C943 727 952 768 960 800 C968 832 993 875 1000 890" fill="none" stroke="#f7bd4f" stroke-width="9" stroke-linecap="round" stroke-linejoin="round"/><path d="M40 450 C57 455 107 468 140 480 C173 492 223 513 240 520" fill="none" stroke="#f7bd4f" stroke-width="9" stroke-linecap="round" stroke-linejoin="round"/><path d="M-10 350 C17 355 98 370 150 382 C202 394 250 412 300 422 C350 432 400 437 450 442 C500 447 550 450 600 452 C650 454 700 455 750 452 C800 449 850 442 900 432 C950 422 1008 405 1050 392 C1092 379 1117 367 1150 352 C1183 337 1203 322 1250 302 C1297 282 1400 244 1430 232" fill="none" stroke="#f5a848" stroke-width="16" stroke-linecap="round" stroke-linejoin="round"/><path d="M1140 330 C1141 345 1145 382 1145 420 C1145 458 1150 516 1140 560 C1130 604 1095 648 1082 682 C1069 716 1062 727 1062 762 C1062 797 1079 869 1082 890" fill="none" stroke="#f39c48" stroke-width="16" stroke-linecap="round" stroke-linejoin="round"/><path d="M1000 400 C1010 388 1040 350 1060 330 C1080 310 1097 292 1120 280 C1143 268 1170 270 1200 260 C1230 250 1262 232 1300 220 C1338 208 1408 195 1430 190" fill="none" stroke="#f5a848" stroke-width="12" stroke-linecap="round" stroke-linejoin="round"/><path d="M-10 52 C17 67 98 114 150 142 C202 170 250 200 300 222 C350 244 400 260 450 272 C500 284 550 288 600 292 C650 296 700 298 750 297 C800 296 850 293 900 287 C950 281 1000 271 1050 262 C1100 253 1158 245 1200 232 C1242 219 1262 200 1300 182 C1338 164 1408 136 1430 127" fill="none" stroke="#f3994a" stroke-width="22" stroke-linecap="round" stroke-linejoin="round"/><path d="M1220 -10 C1222 8 1232 65 1230 100 C1228 135 1223 170 1210 200 C1197 230 1167 253 1150 280 C1133 307 1117 347 1110 360" fill="none" stroke="#f39c4a" stroke-width="10" stroke-linecap="round" stroke-linejoin="round"/><path d="M690 -10 C685 25 677 140 662 200 C647 260 629 315 602 352 C575 389 544 397 502 422 C460 447 390 469 352 502 C314 535 290 589 272 622 C254 655 244 672 242 702 C240 732 252 771 262 802 C272 833 295 875 302 890" fill="none" stroke="#d8518c" stroke-width="5" stroke-linecap="round" stroke-linejoin="round"/><path d="M-10 330 C25 342 132 378 200 402 C268 426 341 449 400 472 C459 495 502 530 552 542 C602 554 642 550 700 547 C758 544 833 538 900 522 C967 506 1033 474 1100 452 C1167 430 1245 407 1300 392 C1355 377 1408 367 1430 362" fill="none" stroke="#d8518c" stroke-width="5" stroke-linecap="round" stroke-linejoin="round"/><circle cx="338" cy="376" r="11" fill="#d63ec8"/><rect x="354" y="369" width="130" height="14" fill="#d63ec8" opacity="0.35"/><circle cx="38" cy="582" r="11" fill="#e25577"/><rect x="54" y="575" width="130" height="14" fill="#e25577" opacity="0.35"/><circle cx="492" cy="710" r="11" fill="#e25577"/><rect x="508" y="703" width="130" height="14" fill="#e25577" opacity="0.35"/><circle cx="962" cy="555" r="11" fill="#e25577"/><rect x="978" y="548" width="130" height="14" fill="#e25577" opacity="0.35"/><circle cx="1345" cy="715" r="11" fill="#e25577"/><rect x="1361" y="708" width="130" height="14" fill="#e25577" opacity="0.35"/><circle cx="615" cy="385" r="11" fill="#9b6fe0"/><rect x="631" y="378" width="130" height="14" fill="#9b6fe0" opacity="0.35"/><circle cx="1200" cy="330" r="11" fill="#9b6fe0"/><rect x="1216" y="323" width="130" height="14" fill="#9b6fe0" opacity="0.35"/><circle cx="1230" cy="548" r="11" fill="#3b8a58"/><rect x="1246" y="541" width="130" height="14" fill="#3b8a58" opacity="0.35"/><circle cx="795" cy="177" r="11" fill="#7c8494"/><rect x="811" y="170" width="130" height="14" fill="#7c8494" opacity="0.35"/><circle cx="380" cy="240" r="11" fill="#7c8494"/><rect x="396" y="233" width="130" height="14" fill="#7c8494" opacity="0.35"/><circle cx="145" cy="35" r="11" fill="#7c8494"/><rect x="161" y="28" width="130" height="14" fill="#7c8494" opacity="0.35"/><circle cx="255" cy="762" r="11" fill="#4aa0e0"/><rect x="271" y="755" width="130" height="14" fill="#4aa0e0" opacity="0.35"/></svg><div class="newb"><span>NEW</span></div></div>
 <div class="label" style="left:120px;top:298px">薄荷绿</div>
 <div class="label" style="left:385.2px;top:298px">暗夜黑</div>
 <div class="label" style="left:650.4px;top:298px">抹茶绿</div>
 <div class="label" style="left:915.6px;top:298px">远山灰</div>
 <div class="label" style="left:1180.8px;top:298px">经典色</div>

 <!-- section 2 -->
 <div class="abs title" style="left:101px;top:362px">我的地图</div>
 <div class="abs card" style="left:101px;top:401px;width:1698px;height:500px"></div>
 <svg class="abs" style="left:119px;top:420px" width="314" height="195"><rect x="1" y="1" width="312" height="193" rx="3" fill="none" stroke="#c9d1e1" stroke-width="2" stroke-dasharray="4 2"/></svg>
 <svg class="abs" style="left:266px;top:496px" width="20" height="20"><path d="M10 1 V19 M1 10 H19" stroke="#4e5d78" stroke-width="2"/></svg>
 <div class="abs" style="left:120px;top:528px;width:312px;text-align:center;font-size:13px;color:#4e5d78;line-height:18px">创建空的地图</div>
 <div class="thumb" style="left:457px;top:421px;width:312px;height:192.5px"><svg style="position:absolute;left:-2px;top:-2px" width="316" height="197" viewBox="0 0 1418 884" preserveAspectRatio="none"><rect width="1418" height="884" fill="#7a7d7f"/><path d="M-10 380 C8 345 57 350 100 350 C143 350 212 362 250 380 C288 398 322 430 330 460 C338 490 322 533 300 560 C278 587 237 613 200 620 C163 627 115 610 80 600 C45 590 5 597 -10 560 C-25 523 -28 415 -10 380Z" fill="#828587"/><path d="M80 650 C97 615 160 632 200 640 C240 648 295 673 320 700 C345 727 362 773 350 800 C338 827 292 852 250 860 C208 868 128 885 100 850 C72 815 63 685 80 650Z" fill="#828587"/><path d="M560 560 C583 543 657 585 700 600 C743 615 803 620 820 650 C837 680 828 755 800 780 C772 805 690 813 650 800 C610 787 575 740 560 700 C545 660 537 577 560 560Z" fill="#828587"/><path d="M1050 560 C1058 520 1117 513 1150 520 C1183 527 1237 563 1250 600 C1263 637 1255 713 1230 740 C1205 767 1130 790 1100 760 C1070 730 1042 600 1050 560Z" fill="#828587"/><path d="M1250 300 C1258 268 1320 260 1350 260 C1380 260 1417 263 1430 300 C1443 337 1452 455 1430 480 C1408 505 1330 480 1300 450 C1270 420 1242 332 1250 300Z" fill="#828587"/><path d="M1150 760 C1175 732 1253 720 1300 720 C1347 720 1408 732 1430 760 C1452 788 1477 868 1430 890 C1383 912 1197 912 1150 890 C1103 868 1125 788 1150 760Z" fill="#828587"/><path d="M110 -10 C-50 -2 168 26 200 40 C232 54 263 62 300 72 C337 82 393 89 420 102 C447 115 445 140 462 152 C479 164 499 174 522 172 C545 170 582 154 602 142 C622 130 625 110 642 102 C659 94 675 90 702 92 C729 94 769 110 802 112 C835 114 869 109 902 102 C935 95 969 82 1002 72 C1035 62 1076 56 1102 42 C1128 28 1325 -1 1160 -10 C995 -19 270 -18 110 -10Z" fill="#6f7274"/><path d="M20 20 C42 30 103 62 150 82 C197 102 250 124 300 142 C350 160 400 179 450 187 C500 195 550 193 600 192 C650 191 700 187 750 182 C800 177 858 172 900 162 C942 152 967 139 1000 122 C1033 105 1075 84 1100 62 C1125 40 1142 2 1150 -10" fill="none" stroke="#5f6266" stroke-width="9" stroke-linecap="round" stroke-linejoin="round"/><path d="M20 60 C47 75 125 123 180 152 C235 181 297 212 350 232 C403 252 450 264 500 272 C550 280 600 284 650 282 C700 280 750 272 800 262 C850 252 908 237 950 222 C992 207 1017 189 1050 172 C1083 155 1108 141 1150 122 C1192 103 1253 75 1300 60 C1347 45 1408 35 1430 30" fill="none" stroke="#5f6266" stroke-width="8" stroke-linecap="round" stroke-linejoin="round"/><path d="M200 212 C225 220 300 247 350 262 C400 277 450 290 500 302 C550 314 600 330 650 332 C700 334 750 322 800 312 C850 302 900 285 950 272 C1000 259 1042 244 1100 232 C1158 220 1245 210 1300 202 C1355 194 1408 185 1430 182" fill="none" stroke="#5f6266" stroke-width="7" stroke-linecap="round" stroke-linejoin="round"/><path d="M940 -10 C942 13 950 95 950 130 C950 165 942 188 940 200" fill="none" stroke="#5f6266" stroke-width="6" stroke-linecap="round" stroke-linejoin="round"/><path d="M880 380 C879 417 874 515 872 600 C870 685 867 842 866 890" fill="none" stroke="#5f6266" stroke-width="7" stroke-linecap="round" stroke-linejoin="round"/><path d="M1120 10 C1130 28 1167 88 1180 120 C1193 152 1188 173 1200 200 C1212 227 1233 257 1250 280 C1267 303 1292 330 1300 340" fill="none" stroke="#5f6266" stroke-width="5" stroke-linecap="round" stroke-linejoin="round"/><path d="M20 420 C33 414 70 393 100 382 C130 371 167 352 200 352 C233 352 267 370 300 382 C333 394 370 402 400 422 C430 442 453 477 480 500 C507 523 547 550 560 560" fill="none" stroke="#5f6266" stroke-width="4" stroke-linecap="round" stroke-linejoin="round"/><path d="M600 560 C617 565 667 585 700 592 C733 599 767 604 800 602 C833 600 867 589 900 582 C933 575 967 569 1000 562 C1033 555 1067 542 1100 542 C1133 542 1167 552 1200 562 C1233 572 1263 589 1300 602 C1337 615 1400 634 1420 640" fill="none" stroke="#5f6266" stroke-width="4" stroke-linecap="round" stroke-linejoin="round"/><path d="M1000 380 C1008 400 1033 460 1050 500 C1067 540 1083 580 1100 620 C1117 660 1133 695 1150 740 C1167 785 1192 865 1200 890" fill="none" stroke="#5f6266" stroke-width="4" stroke-linecap="round" stroke-linejoin="round"/><path d="M1180 300 C1192 317 1230 367 1250 400 C1270 433 1283 467 1300 500 C1317 533 1332 567 1350 600 C1368 633 1400 683 1410 700" fill="none" stroke="#5f6266" stroke-width="4" stroke-linecap="round" stroke-linejoin="round"/><path d="M-10 520 C8 517 65 507 100 500 C135 493 167 477 200 480 C233 483 283 513 300 520" fill="none" stroke="#5f6266" stroke-width="4" stroke-linecap="round" stroke-linejoin="round"/><path d="M60 640 C75 637 118 613 150 620 C182 627 225 657 250 680 C275 703 278 740 300 760 C322 780 350 788 380 800 C410 812 463 825 480 830" fill="none" stroke="#5f6266" stroke-width="4" stroke-linecap="round" stroke-linejoin="round"/><path d="M600 640 C608 653 633 690 650 720 C667 750 682 792 700 820 C718 848 750 878 760 890" fill="none" stroke="#5f6266" stroke-width="4" stroke-linecap="round" stroke-linejoin="round"/><path d="M900 620 C908 633 933 677 950 700 C967 723 983 735 1000 760 C1017 785 1042 835 1050 850" fill="none" stroke="#5f6266" stroke-width="4" stroke-linecap="round" stroke-linejoin="round"/><path d="M700 190 C703 213 715 292 720 330 C725 368 728 405 730 420" fill="none" stroke="#5f6266" stroke-width="4" stroke-linecap="round" stroke-linejoin="round"/><path d="M560 200 L580 320" fill="none" stroke="#5f6266" stroke-width="4" stroke-linecap="round" stroke-linejoin="round"/><path d="M820 180 L830 320" fill="none" stroke="#5f6266" stroke-width="4" stroke-linecap="round" stroke-linejoin="round"/><path d="M760 190 L780 330" fill="none" stroke="#5f6266" stroke-width="4" stroke-linecap="round" stroke-linejoin="round"/><path d="M880 170 L900 300" fill="none" stroke="#5f6266" stroke-width="4" stroke-linecap="round" stroke-linejoin="round"/><path d="M640 200 L650 320" fill="none" stroke="#5f6266" stroke-width="4" stroke-linecap="round" stroke-linejoin="round"/><path d="M450 300 C475 308 545 340 600 350 C655 360 730 363 780 360 C830 357 880 335 900 330" fill="none" stroke="#5f6266" stroke-width="4" stroke-linecap="round" stroke-linejoin="round"/><path d="M500 400 C517 403 567 413 600 420 C633 427 663 440 700 440 C737 440 800 423 820 420" fill="none" stroke="#5f6266" stroke-width="4" stroke-linecap="round" stroke-linejoin="round"/><path d="M200 300 C208 313 230 360 250 380 C270 400 308 413 320 420" fill="none" stroke="#5f6266" stroke-width="4" stroke-linecap="round" stroke-linejoin="round"/><path d="M1300 150 C1308 167 1330 225 1350 250 C1370 275 1408 292 1420 300" fill="none" stroke="#5f6266" stroke-width="4" stroke-linecap="round" stroke-linejoin="round"/><path d="M1000 250 C1008 262 1030 302 1050 320 C1070 338 1095 350 1120 360 C1145 370 1187 377 1200 380" fill="none" stroke="#5f6266" stroke-width="4" stroke-linecap="round" stroke-linejoin="round"/><path d="M1250 420 C1258 430 1278 463 1300 480 C1322 497 1367 513 1380 520" fill="none" stroke="#5f6266" stroke-width="4" stroke-linecap="round" stroke-linejoin="round"/><path d="M20 700 C30 710 58 740 80 760 C102 780 138 810 150 820" fill="none" stroke="#5f6266" stroke-width="4" stroke-linecap="round" stroke-linejoin="round"/><path d="M300 100 L320 200" fill="none" stroke="#5f6266" stroke-width="4" stroke-linecap="round" stroke-linejoin="round"/><path d="M150 120 L170 220" fill="none" stroke="#5f6266" stroke-width="4" stroke-linecap="round" stroke-linejoin="round"/><path d="M1050 380 C1067 387 1120 407 1150 420 C1180 433 1217 453 1230 460" fill="none" stroke="#5f6266" stroke-width="4" stroke-linecap="round" stroke-linejoin="round"/><path d="M600 850 C617 842 667 805 700 800 C733 795 767 808 800 820 C833 832 883 862 900 870" fill="none" stroke="#5f6266" stroke-width="4" stroke-linecap="round" stroke-linejoin="round"/><path d="M709 169 C742 166 854 158 908 149 C962 140 999 130 1032 114 C1065 98 1090 71 1107 50 C1124 29 1128 0 1132 -10" fill="none" stroke="#5e6164" stroke-width="8" stroke-linecap="round" stroke-linejoin="round"/><path d="M709 274 C734 263 808 230 858 209 C908 188 974 163 1007 149 C1040 135 1024 134 1057 124 C1090 114 1157 108 1207 90 C1257 72 1331 28 1356 15" fill="none" stroke="#5e6164" stroke-width="7" stroke-linecap="round" stroke-linejoin="round"/><path d="M709 323 C734 317 800 303 858 289 C916 275 999 256 1057 239 C1115 222 1166 208 1207 189 C1248 170 1277 146 1306 124 C1335 102 1368 71 1380 60" fill="none" stroke="#5e6164" stroke-width="5" stroke-linecap="round" stroke-linejoin="round"/><path d="M943 -10 L953 139" fill="none" stroke="#5e6164" stroke-width="5" stroke-linecap="round" stroke-linejoin="round"/><path d="M1321 65 C1318 75 1314 98 1306 124 C1298 150 1275 195 1271 224 C1267 253 1271 270 1281 299 C1291 328 1320 364 1331 398 C1342 432 1355 466 1350 500 C1345 534 1308 583 1300 600" fill="none" stroke="#5e6164" stroke-width="4" stroke-linecap="round" stroke-linejoin="round"/><path d="M760 270 C763 292 773 365 780 400 C787 435 797 467 800 480" fill="none" stroke="#5e6164" stroke-width="4" stroke-linecap="round" stroke-linejoin="round"/><path d="M820 250 C823 272 833 345 840 380 C847 415 857 447 860 460" fill="none" stroke="#5e6164" stroke-width="4" stroke-linecap="round" stroke-linejoin="round"/><path d="M900 220 C903 238 912 297 920 330 C928 363 945 405 950 420" fill="none" stroke="#5e6164" stroke-width="4" stroke-linecap="round" stroke-linejoin="round"/><path d="M980 200 C983 217 990 270 1000 300 C1010 330 1033 367 1040 380" fill="none" stroke="#5e6164" stroke-width="4" stroke-linecap="round" stroke-linejoin="round"/><path d="M1060 230 C1065 247 1080 302 1090 330 C1100 358 1115 388 1120 400" fill="none" stroke="#5e6164" stroke-width="4" stroke-linecap="round" stroke-linejoin="round"/><path d="M720 420 C747 417 833 407 880 400 C927 393 960 390 1000 380 C1040 370 1100 347 1120 340" fill="none" stroke="#63666a" stroke-width="3" stroke-linecap="round" stroke-linejoin="round"/><path d="M740 470 C767 465 848 448 900 440 C952 432 1000 430 1050 420 C1100 410 1175 387 1200 380" fill="none" stroke="#63666a" stroke-width="3" stroke-linecap="round" stroke-linejoin="round"/><path d="M1100 300 C1108 313 1133 353 1150 380 C1167 407 1183 437 1200 460 C1217 483 1242 510 1250 520" fill="none" stroke="#63666a" stroke-width="3" stroke-linecap="round" stroke-linejoin="round"/><path d="M1000 420 C1008 433 1033 473 1050 500 C1067 527 1075 557 1100 580 C1125 603 1183 630 1200 640" fill="none" stroke="#63666a" stroke-width="3" stroke-linecap="round" stroke-linejoin="round"/><path d="M1150 450 C1167 455 1217 475 1250 480 C1283 485 1333 480 1350 480" fill="none" stroke="#63666a" stroke-width="3" stroke-linecap="round" stroke-linejoin="round"/><path d="M615 -10 C606 25 592 143 560 200 C528 257 455 293 420 332 C385 371 361 404 350 432 C339 460 344 475 352 500 C360 525 384 555 400 580 C416 605 430 622 450 652 C470 682 497 722 520 762 C543 802 578 869 590 890" fill="none" stroke="#55585b" stroke-width="3" stroke-linecap="round" stroke-linejoin="round"/><rect x="700" y="105" width="130" height="10" fill="#65686b" opacity="0.5"/><rect x="420" y="230" width="140" height="10" fill="#65686b" opacity="0.5"/><rect x="120" y="265" width="110" height="10" fill="#65686b" opacity="0.5"/><rect x="1330" y="130" width="60" height="10" fill="#65686b" opacity="0.5"/><rect x="1160" y="185" width="60" height="10" fill="#65686b" opacity="0.5"/><rect x="1100" y="465" width="120" height="10" fill="#65686b" opacity="0.5"/><rect x="1300" y="465" width="80" height="10" fill="#65686b" opacity="0.5"/><rect x="120" y="450" width="150" height="10" fill="#65686b" opacity="0.5"/><rect x="360" y="625" width="90" height="10" fill="#65686b" opacity="0.5"/><rect x="580" y="630" width="60" height="10" fill="#65686b" opacity="0.5"/><rect x="860" y="710" width="50" height="10" fill="#65686b" opacity="0.5"/><rect x="380" y="750" width="80" height="10" fill="#65686b" opacity="0.5"/><rect x="150" y="775" width="60" height="10" fill="#65686b" opacity="0.5"/><rect x="1040" y="800" width="60" height="10" fill="#65686b" opacity="0.5"/><rect x="1180" y="380" width="80" height="10" fill="#65686b" opacity="0.5"/><rect x="960" y="255" width="60" height="10" fill="#65686b" opacity="0.5"/><rect x="1320" y="680" width="60" height="10" fill="#65686b" opacity="0.5"/></svg></div>
 <div class="thumb" style="left:793.7px;top:421px;width:312px;height:192.5px"><svg style="position:absolute;left:-2.7px;top:-2px" width="317" height="197" viewBox="0 0 1422 884" preserveAspectRatio="none"><rect width="1422" height="884" fill="#000"/><path d="M130 10 L240 10 L230 90 L140 100Z" fill="#2a5443"/><path d="M20 60 L130 80 L120 160 L20 150Z" fill="#2a5443"/><path d="M320 20 L470 20 L460 170 L380 190 L330 120Z" fill="#2a5443"/><path d="M240 90 L320 100 L310 150 L240 140Z" fill="#2a5443"/><path d="M510 70 L600 60 L610 130 L520 140Z" fill="#2a5443"/><path d="M690 140 L760 140 L750 250 L680 260Z" fill="#2a5443"/><path d="M600 90 L760 100 L740 130 L600 120Z" fill="#2a5443"/><path d="M20 220 L90 230 L60 300 L20 290Z" fill="#2a5443"/><path d="M40 330 L180 330 L180 420 L40 430Z" fill="#2a5443"/><path d="M150 250 L220 240 L230 330 L160 340Z" fill="#2a5443"/><path d="M330 180 L410 200 L400 260 L330 250Z" fill="#2a5443"/><path d="M530 300 L600 300 L600 350 L530 350Z" fill="#2a5443"/><path d="M800 130 L860 150 L850 230 L800 240Z" fill="#2a5443"/><path d="M940 180 L1040 160 L1050 260 L970 300 L930 260Z" fill="#2a5443"/><path d="M800 270 L960 300 L1000 330 L1010 440 L900 440 L820 380Z" fill="#2a5443"/><path d="M1080 330 L1150 310 L1230 380 L1160 430 L1080 420Z" fill="#2a5443"/><path d="M1170 380 L1220 400 L1200 440 L1160 430Z" fill="#2a5443"/><path d="M640 400 L760 420 L750 470 L640 450Z" fill="#2a5443"/><path d="M490 420 L560 430 L540 470 L480 460Z" fill="#2a5443"/><path d="M560 470 L700 500 L800 470 L900 520 L1080 530 L1000 700 L900 720 L850 620 L760 600 L650 580 L560 540Z" fill="#2a5443"/><path d="M80 480 L160 450 L260 460 L280 540 L200 580 L120 560Z" fill="#2a5443"/><path d="M310 480 L410 490 L400 560 L310 560Z" fill="#2a5443"/><path d="M20 620 L80 560 L150 590 L140 660 L40 680Z" fill="#2a5443"/><path d="M200 610 L310 600 L330 680 L270 720 L190 700Z" fill="#2a5443"/><path d="M130 680 L200 690 L200 740 L130 740Z" fill="#2a5443"/><path d="M570 630 L650 640 L640 730 L570 720Z" fill="#2a5443"/><path d="M680 700 L760 690 L760 760 L690 770Z" fill="#2a5443"/><path d="M800 590 L960 600 L940 700 L820 700Z" fill="#2a5443"/><path d="M740 720 L900 720 L1000 700 L1050 760 L1040 880 L700 880Z" fill="#2a5443"/><path d="M470 640 L520 640 L510 700 L460 700Z" fill="#2a5443"/><path d="M370 760 L440 760 L430 850 L360 840Z" fill="#2a5443"/><path d="M260 760 L320 780 L300 830 L250 820Z" fill="#2a5443"/><path d="M20 760 L100 770 L120 880 L20 880Z" fill="#2a5443"/><path d="M380 820 L500 800 L560 850 L560 880 L380 880Z" fill="#2a5443"/><path d="M1140 630 L1320 640 L1320 710 L1140 700Z" fill="#2a5443"/><path d="M1190 570 L1290 580 L1280 640 L1190 630Z" fill="#2a5443"/><path d="M1220 760 L1420 760 L1420 880 L1220 880Z" fill="#2a5443"/><path d="M1340 660 L1420 660 L1420 720 L1340 720Z" fill="#2a5443"/><path d="M1300 500 L1420 520 L1420 590 L1300 580Z" fill="#2a5443"/><path d="M1360 330 L1420 330 L1420 420 L1340 420Z" fill="#2a5443"/><path d="M1210 500 L1260 490 L1260 560 L1210 560Z" fill="#2a5443"/><path d="M240 270 L320 270 L300 330 L240 330Z" fill="#2a5443"/><path d="M420 330 L490 340 L480 420 L420 410Z" fill="#2a5443"/><path d="M560 10 L640 10 L650 60 L560 60Z" fill="#2a5443"/><path d="M900 10 L1000 10 L990 50 L900 50Z" fill="#2a5443"/><path d="M-10 25 C17 35 90 63 150 85 C210 107 292 135 350 155 C408 175 455 185 500 205 C545 225 587 255 620 275 C653 295 670 307 700 325 C730 343 767 367 800 385 C833 403 867 422 900 435 C933 448 967 458 1000 465 C1033 472 1058 475 1100 475 C1142 475 1195 467 1250 465 C1305 463 1400 465 1430 465" fill="none" stroke="#5aa281" stroke-width="5" stroke-linecap="round" stroke-linejoin="round"/><path d="M-10 40 C17 50 90 78 150 100 C210 122 292 150 350 170 C408 190 455 200 500 220 C545 240 587 270 620 290 C653 310 670 322 700 340 C730 358 767 382 800 400 C833 418 867 437 900 450 C933 463 967 473 1000 480 C1033 487 1058 490 1100 490 C1142 490 1195 482 1250 480 C1305 478 1400 480 1430 480" fill="none" stroke="#5aa281" stroke-width="5" stroke-linecap="round" stroke-linejoin="round"/><path d="M-10 58 C17 68 90 96 150 118 C210 140 292 168 350 188 C408 208 455 218 500 238 C545 258 587 288 620 308 C653 328 670 340 700 358 C730 376 767 400 800 418 C833 436 867 455 900 468 C933 481 967 491 1000 498 C1033 505 1058 508 1100 508 C1142 508 1195 500 1250 498 C1305 496 1400 498 1430 498" fill="none" stroke="#5aa281" stroke-width="5" stroke-linecap="round" stroke-linejoin="round"/><path d="M-10 75 C17 85 90 113 150 135 C210 157 292 185 350 205 C408 225 455 235 500 255 C545 275 587 305 620 325 C653 345 670 357 700 375 C730 393 767 417 800 435 C833 453 867 472 900 485 C933 498 967 508 1000 515 C1033 522 1058 525 1100 525 C1142 525 1195 517 1250 515 C1305 513 1400 515 1430 515" fill="none" stroke="#5aa281" stroke-width="3" stroke-linecap="round" stroke-linejoin="round"/><path d="M420 10 C467 15 620 32 700 40 C780 48 833 54 900 60 C967 66 1033 71 1100 75 C1167 79 1245 82 1300 85 C1355 88 1408 89 1430 90" fill="none" stroke="#5aa281" stroke-width="12" stroke-linecap="round" stroke-linejoin="round"/><path d="M-10 290 C8 295 65 308 100 320 C135 332 167 343 200 360 C233 377 267 405 300 420 C333 435 367 440 400 450 C433 460 467 465 500 480 C533 495 567 520 600 540 C633 560 667 582 700 600 C733 618 750 635 800 650 C850 665 933 678 1000 690 C1067 702 1128 712 1200 720 C1272 728 1392 737 1430 740" fill="none" stroke="#5aa281" stroke-width="6" stroke-linecap="round" stroke-linejoin="round"/><path d="M-10 310 C8 315 65 328 100 340 C135 352 167 363 200 380 C233 397 267 425 300 440 C333 455 367 460 400 470 C433 480 467 485 500 500 C533 515 567 540 600 560 C633 580 667 602 700 620 C733 638 750 655 800 670 C850 685 933 698 1000 710 C1067 722 1128 732 1200 740 C1272 748 1392 757 1430 760" fill="none" stroke="#5aa281" stroke-width="3" stroke-linecap="round" stroke-linejoin="round"/><path d="M-10 740 C8 733 65 720 100 700 C135 680 167 643 200 620 C233 597 267 578 300 560 C333 542 367 525 400 510 C433 495 470 485 500 470 C530 455 557 438 580 420 C603 402 620 380 640 360 C660 340 680 313 700 300 C720 287 750 283 760 280" fill="none" stroke="#5aa281" stroke-width="5" stroke-linecap="round" stroke-linejoin="round"/><path d="M480 10 C478 33 470 115 470 150 C470 185 478 208 480 220" fill="none" stroke="#5aa281" stroke-width="5" stroke-linecap="round" stroke-linejoin="round"/><path d="M800 90 C797 108 787 165 780 200 C773 235 763 283 760 300" fill="none" stroke="#5aa281" stroke-width="5" stroke-linecap="round" stroke-linejoin="round"/><path d="M1070 90 C1102 92 1228 68 1260 100 C1292 132 1292 250 1260 280 C1228 310 1105 293 1070 280 C1035 267 1050 232 1050 200 C1050 168 1067 108 1070 90" fill="none" stroke="#5aa281" stroke-width="4" stroke-linecap="round" stroke-linejoin="round"/><path d="M1040 280 C1037 307 1020 407 1020 440 C1020 473 1037 473 1040 480" fill="none" stroke="#5aa281" stroke-width="4" stroke-linecap="round" stroke-linejoin="round"/><path d="M1280 280 C1275 297 1255 348 1250 380 C1245 412 1250 455 1250 470" fill="none" stroke="#5aa281" stroke-width="4" stroke-linecap="round" stroke-linejoin="round"/><path d="M1430 300 C1408 305 1333 310 1300 330 C1267 350 1250 397 1230 420 C1210 443 1188 462 1180 470" fill="none" stroke="#5aa281" stroke-width="4" stroke-linecap="round" stroke-linejoin="round"/><path d="M1430 420 C1408 437 1338 490 1300 520 C1262 550 1233 570 1200 600 C1167 630 1125 673 1100 700 C1075 727 1067 730 1050 760 C1033 790 1008 860 1000 880" fill="none" stroke="#5aa281" stroke-width="3" stroke-linecap="round" stroke-linejoin="round"/><path d="M680 10 C683 25 687 75 700 100 C713 125 743 143 760 160 C777 177 793 193 800 200" fill="none" stroke="#5aa281" stroke-width="3" stroke-linecap="round" stroke-linejoin="round"/><path d="M120 420 C133 433 183 470 200 500 C217 530 223 567 220 600 C217 633 200 670 180 700 C160 730 120 750 100 780 C80 810 67 863 60 880" fill="none" stroke="#5aa281" stroke-width="3" stroke-linecap="round" stroke-linejoin="round"/><path d="M300 440 C308 453 337 493 350 520 C363 547 372 570 380 600 C388 630 393 653 400 700 C407 747 417 850 420 880" fill="none" stroke="#5aa281" stroke-width="3" stroke-linecap="round" stroke-linejoin="round"/><path d="M560 470 C557 485 547 532 540 560 C533 588 527 607 520 640 C513 673 503 720 500 760 C497 800 500 860 500 880" fill="none" stroke="#5aa281" stroke-width="3" stroke-linecap="round" stroke-linejoin="round"/><path d="M20 470 C50 465 153 448 200 440 C247 432 283 423 300 420" fill="none" stroke="#5aa281" stroke-width="3" stroke-linecap="round" stroke-linejoin="round"/><path d="M20 560 C42 565 112 583 150 590 C188 597 217 598 250 600 C283 602 333 600 350 600" fill="none" stroke="#5aa281" stroke-width="3" stroke-linecap="round" stroke-linejoin="round"/><path d="M860 480 C873 490 923 517 940 540 C957 563 958 593 960 620 C962 647 952 687 950 700" fill="none" stroke="#5aa281" stroke-width="3" stroke-linecap="round" stroke-linejoin="round"/><path d="M700 620 C697 633 687 670 680 700 C673 730 665 770 660 800 C655 830 652 867 650 880" fill="none" stroke="#5aa281" stroke-width="3" stroke-linecap="round" stroke-linejoin="round"/><path d="M1430 610 C1408 608 1338 607 1300 600 C1262 593 1227 582 1200 570 C1173 558 1150 537 1140 530" fill="none" stroke="#5aa281" stroke-width="3" stroke-linecap="round" stroke-linejoin="round"/><path d="M240 10 C240 28 238 80 240 120 C242 160 250 203 250 250 C250 297 242 375 240 400" fill="none" stroke="#5aa281" stroke-width="3" stroke-linecap="round" stroke-linejoin="round"/><path d="M320 10 L330 100" fill="none" stroke="#5aa281" stroke-width="3" stroke-linecap="round" stroke-linejoin="round"/><path d="M130 150 C145 153 187 165 220 170 C253 175 312 178 330 180" fill="none" stroke="#5aa281" stroke-width="3" stroke-linecap="round" stroke-linejoin="round"/><path d="M900 300 C900 275 883 183 900 150 C917 117 983 108 1000 100" fill="none" stroke="#5aa281" stroke-width="3" stroke-linecap="round" stroke-linejoin="round"/><path d="M1080 560 C1083 570 1092 603 1100 620 C1108 637 1113 647 1130 660 C1147 673 1188 693 1200 700" fill="none" stroke="#5aa281" stroke-width="3" stroke-linecap="round" stroke-linejoin="round"/><path d="M1300 720 C1305 730 1320 753 1330 780 C1340 807 1355 863 1360 880" fill="none" stroke="#5aa281" stroke-width="3" stroke-linecap="round" stroke-linejoin="round"/><path d="M1070 100 C1098 102 1210 82 1240 110 C1270 138 1277 243 1250 270 C1223 297 1112 283 1080 270 C1048 257 1062 218 1060 190 C1058 162 1068 115 1070 100" fill="none" stroke="#000" stroke-width="2" stroke-linecap="round" stroke-linejoin="round"/><path d="M420 10 C467 15 620 32 700 40 C780 48 833 54 900 60 C967 66 1033 71 1100 75 C1167 79 1245 82 1300 85 C1355 88 1408 89 1430 90" fill="none" stroke="#000" stroke-width="2" stroke-linecap="round" stroke-linejoin="round"/><path d="M20 200 C37 203 83 210 120 220 C157 230 220 253 240 260" fill="none" stroke="#5aa281" stroke-width="3" stroke-linecap="round" stroke-linejoin="round"/><path d="M260 250 C263 275 273 348 280 400 C287 452 297 533 300 560" fill="none" stroke="#5aa281" stroke-width="3" stroke-linecap="round" stroke-linejoin="round"/><path d="M160 340 L180 480" fill="none" stroke="#5aa281" stroke-width="3" stroke-linecap="round" stroke-linejoin="round"/><path d="M560 240 C557 255 547 300 540 330 C533 360 523 405 520 420" fill="none" stroke="#5aa281" stroke-width="3" stroke-linecap="round" stroke-linejoin="round"/><path d="M600 620 C607 633 623 677 640 700 C657 723 690 750 700 760" fill="none" stroke="#5aa281" stroke-width="3" stroke-linecap="round" stroke-linejoin="round"/><path d="M760 600 C763 617 773 653 780 700 C787 747 797 850 800 880" fill="none" stroke="#5aa281" stroke-width="3" stroke-linecap="round" stroke-linejoin="round"/><path d="M900 560 C917 560 967 563 1000 560 C1033 557 1083 543 1100 540" fill="none" stroke="#5aa281" stroke-width="3" stroke-linecap="round" stroke-linejoin="round"/><path d="M1160 620 C1183 620 1255 617 1300 620 C1345 623 1408 637 1430 640" fill="none" stroke="#5aa281" stroke-width="3" stroke-linecap="round" stroke-linejoin="round"/><path d="M1180 700 C1200 703 1258 717 1300 720 C1342 723 1408 720 1430 720" fill="none" stroke="#5aa281" stroke-width="3" stroke-linecap="round" stroke-linejoin="round"/><path d="M1300 740 C1292 750 1263 777 1250 800 C1237 823 1225 867 1220 880" fill="none" stroke="#5aa281" stroke-width="3" stroke-linecap="round" stroke-linejoin="round"/><path d="M330 600 C350 603 412 613 450 620 C488 627 542 637 560 640" fill="none" stroke="#5aa281" stroke-width="3" stroke-linecap="round" stroke-linejoin="round"/><path d="M80 700 C100 710 163 743 200 760 C237 777 283 793 300 800" fill="none" stroke="#5aa281" stroke-width="3" stroke-linecap="round" stroke-linejoin="round"/><path d="M50 850 C75 847 150 828 200 830 C250 832 325 855 350 860" fill="none" stroke="#5aa281" stroke-width="3" stroke-linecap="round" stroke-linejoin="round"/><path d="M880 320 L860 420" fill="none" stroke="#5aa281" stroke-width="3" stroke-linecap="round" stroke-linejoin="round"/><path d="M1100 300 L1200 320" fill="none" stroke="#5aa281" stroke-width="3" stroke-linecap="round" stroke-linejoin="round"/><path d="M1300 200 L1430 220" fill="none" stroke="#5aa281" stroke-width="3" stroke-linecap="round" stroke-linejoin="round"/><path d="M420 120 C443 125 513 150 560 150 C607 150 677 125 700 120" fill="none" stroke="#5aa281" stroke-width="3" stroke-linecap="round" stroke-linejoin="round"/><path d="M600 60 L640 200" fill="none" stroke="#5aa281" stroke-width="3" stroke-linecap="round" stroke-linejoin="round"/><path d="M30 420 C42 423 82 417 100 440 C118 463 133 540 140 560" fill="none" stroke="#5aa281" stroke-width="3" stroke-linecap="round" stroke-linejoin="round"/><path d="M270 245 C295 254 382 278 420 300 C458 322 470 353 500 380 C530 407 567 437 600 460 C633 483 683 510 700 520" fill="none" stroke="#74d49f" stroke-width="3" stroke-linecap="round" stroke-linejoin="round"/><path d="M1000 530 C1033 525 1140 518 1200 500 C1260 482 1333 433 1360 420" fill="none" stroke="#74d49f" stroke-width="3" stroke-linecap="round" stroke-linejoin="round"/></svg></div>
 <div class="thumb" style="left:1130.7px;top:421px;width:312px;height:192.5px"><svg style="position:absolute;left:-2.7px;top:-2px" width="317" height="197" viewBox="0 0 1422 884" preserveAspectRatio="none"><rect width="1422" height="884" fill="#9ddcfa"/><path d="M193 147 C197 141 216 135 228 130 C240 125 251 123 264 118 C277 113 290 106 305 100 C320 94 339 87 355 84 C371 81 379 76 400 80 C421 84 450 102 480 110 C510 118 552 127 580 130 C608 133 630 133 650 130 C670 127 682 122 700 112 C718 102 740 80 760 70 C780 60 800 57 820 55 C840 53 863 56 880 60 C897 64 904 73 920 80 C936 87 957 92 979 101 C1001 110 1026 121 1050 132 C1074 143 1102 154 1126 167 C1150 180 1174 197 1192 213 C1210 229 1218 247 1233 264 C1248 281 1272 298 1279 315 C1286 332 1280 351 1274 365 C1268 379 1249 386 1240 400 C1231 414 1220 433 1222 450 C1224 467 1239 485 1250 500 C1261 515 1280 527 1290 540 C1300 553 1307 563 1312 580 C1317 597 1324 622 1322 642 C1320 662 1304 677 1302 702 C1300 727 1319 775 1312 792 C1305 809 1290 807 1262 802 C1234 797 1169 775 1142 762 C1115 749 1115 732 1100 722 C1085 712 1065 699 1050 702 C1035 705 1020 719 1012 742 C1004 765 1010 820 1002 842 C994 864 979 867 962 872 C945 877 915 880 902 872 C889 864 889 840 882 822 C875 804 872 775 862 762 C852 749 835 749 822 742 C809 735 792 732 782 722 C772 712 759 699 762 682 C765 665 799 640 802 622 C805 604 797 585 782 575 C767 565 728 564 711 560 C694 556 694 548 680 552 C666 556 646 579 627 584 C608 589 582 589 565 584 C548 579 539 563 523 552 C507 541 488 529 471 516 C454 503 437 490 418 474 C399 458 374 444 355 422 C336 400 319 365 305 340 C291 315 282 294 269 274 C256 254 240 235 228 223 C216 211 202 212 198 203 C194 194 204 177 203 168 C202 159 189 153 193 147Z" fill="#e5edf3"/><path d="M157 547 C164 537 184 530 199 521 C214 512 232 495 246 495 C260 495 278 508 282 521 C286 534 270 561 272 573 C274 585 284 590 293 594 C302 598 320 586 324 594 C328 602 304 629 314 641 C324 653 375 657 387 667 C399 677 392 690 387 699 C382 708 371 712 355 720 C339 728 300 744 293 746 C286 748 293 738 314 735 C335 732 387 732 418 730 C449 728 478 721 502 725 C526 729 560 744 565 756 C570 768 549 788 533 798 C517 808 487 805 471 819 C455 833 480 873 439 884 C398 895 260 900 225 884 C190 868 231 813 230 788 C229 763 230 744 220 735 C210 726 189 737 173 735 C157 733 134 732 125 725 C116 718 113 706 118 690 C123 674 140 643 157 631 C174 619 211 627 220 620 C229 613 220 597 210 590 C200 583 169 587 160 580 C151 573 150 557 157 547Z" fill="#e5edf3"/><path d="M1040 -10 C982 2 1065 42 1081 61 C1097 80 1118 94 1137 107 C1156 120 1174 142 1192 137 C1210 132 1227 91 1243 76 C1259 61 1276 46 1289 46 C1302 46 1316 65 1324 76 C1332 87 1336 95 1334 112 C1332 129 1316 156 1314 178 C1312 200 1316 223 1324 244 C1332 265 1347 290 1365 305 C1383 320 1419 388 1430 335 C1441 282 1495 48 1430 -10 C1365 -68 1098 -22 1040 -10Z" fill="#e5edf3"/><path d="M686 495 C693 483 726 476 740 480 C754 484 768 508 770 520 C772 532 762 550 750 555 C738 560 711 560 700 550 C689 540 679 507 686 495Z" fill="#9ddcfa"/><path d="M690 670 C700 663 728 655 740 660 C752 665 763 690 760 700 C757 710 733 720 720 720 C707 720 685 708 680 700 C675 692 680 677 690 670Z" fill="#e5edf3"/><path d="M700 540 C702 532 745 527 760 530 C775 533 792 552 790 560 C788 568 765 583 750 580 C735 577 698 548 700 540Z" fill="#e5edf3"/><path d="M1280 240 C1287 228 1322 235 1330 250 C1338 265 1337 318 1330 330 C1323 342 1298 335 1290 320 C1282 305 1273 252 1280 240Z" fill="#e5edf3"/><path d="M210 160 C215 152 235 153 250 150 C265 147 275 142 300 140 C325 138 367 137 400 140 C433 143 467 154 500 160 C533 166 573 176 600 178 C627 180 640 177 660 172 C680 167 700 160 720 150 C740 140 758 122 780 112 C802 102 830 92 850 92 C870 92 885 104 900 112 C915 120 923 132 940 142 C957 152 982 162 1000 172 C1018 182 1037 187 1050 202 C1063 217 1072 245 1080 262 C1088 279 1088 291 1100 302 C1112 313 1133 322 1150 330 C1167 338 1190 338 1200 350 C1210 362 1213 382 1210 400 C1207 418 1193 443 1180 460 C1167 477 1150 490 1130 500 C1110 510 1082 503 1060 520 C1038 537 1017 585 1000 600 C983 615 977 610 960 610 C943 610 920 608 900 600 C880 592 858 570 840 560 C822 550 807 550 790 540 C773 530 757 513 740 500 C723 487 707 473 690 460 C673 447 657 427 640 420 C623 413 610 418 590 420 C570 422 542 430 520 430 C498 430 480 425 460 420 C440 415 418 408 400 400 C382 392 365 383 350 370 C335 357 320 340 310 320 C300 300 298 267 290 250 C282 233 272 228 260 220 C248 212 228 210 220 200 C212 190 205 168 210 160Z" fill="#aee3a0"/><path d="M1130 540 C1142 523 1178 513 1200 520 C1222 527 1248 550 1260 580 C1272 610 1275 675 1270 700 C1265 725 1247 730 1230 730 C1213 730 1187 718 1170 700 C1153 682 1137 647 1130 620 C1123 593 1118 557 1130 540Z" fill="#aee3a0"/><path d="M450 450 C457 440 495 440 520 440 C545 440 578 440 600 450 C622 460 647 484 650 500 C653 516 637 538 620 545 C603 552 573 548 550 540 C527 532 497 515 480 500 C463 485 443 460 450 450Z" fill="#aee3a0"/><path d="M880 720 C888 700 918 687 930 700 C942 713 952 773 950 800 C948 827 932 857 920 860 C908 863 887 843 880 820 C873 797 872 740 880 720Z" fill="#aee3a0"/><path d="M780 620 C788 605 830 597 850 600 C870 603 897 625 900 640 C903 655 887 682 870 690 C853 698 815 702 800 690 C785 678 772 635 780 620Z" fill="#aee3a0"/><path d="M1100 20 C1112 8 1153 5 1170 10 C1187 15 1203 33 1200 50 C1197 67 1167 105 1150 110 C1133 115 1108 95 1100 80 C1092 65 1088 32 1100 20Z" fill="#aee3a0"/><path d="M1290 250 C1295 243 1317 250 1320 260 C1323 270 1315 303 1310 310 C1305 317 1293 310 1290 300 C1287 290 1285 257 1290 250Z" fill="#aee3a0"/><path d="M1000 400 C1003 383 1063 373 1080 380 C1097 387 1103 423 1100 440 C1097 457 1077 487 1060 480 C1043 473 997 417 1000 400Z" fill="#aee3a0"/><path d="M199 535 C205 523 236 501 246 500 C256 499 265 520 262 530 C259 540 239 553 230 560 C221 567 215 574 210 570 C205 566 193 547 199 535Z" fill="#aee3a0"/><path d="M190 600 C190 597 225 583 240 590 C255 597 270 622 280 640 C290 658 302 683 300 700 C298 717 280 727 270 740 C260 753 247 756 240 780 C233 804 215 867 230 884 C245 901 310 898 330 884 C350 870 338 821 350 800 C362 779 380 770 400 760 C420 750 453 747 470 740 C487 733 505 727 500 720 C495 713 463 700 440 700 C417 700 380 715 360 720 C340 725 332 733 320 730 C308 727 297 713 290 700 C283 687 288 665 280 650 C272 635 255 618 240 610 C225 602 190 603 190 600Z" fill="#aee3a0"/><path d="M310 650 C312 638 332 618 340 620 C348 622 362 648 360 660 C358 672 338 692 330 690 C322 688 308 662 310 650Z" fill="#aee3a0"/><path d="M480 120 C490 112 545 128 560 140 C575 152 580 182 570 190 C560 198 515 202 500 190 C485 178 470 128 480 120Z" fill="#e6eef2" opacity="0.75"/><path d="M700 150 C710 138 750 137 760 150 C770 163 770 218 760 230 C750 242 710 233 700 220 C690 207 690 162 700 150Z" fill="#e6eef2" opacity="0.75"/><path d="M960 170 C970 165 1005 185 1010 200 C1015 215 1000 255 990 260 C980 265 955 245 950 230 C945 215 950 175 960 170Z" fill="#e6eef2" opacity="0.75"/><path d="M820 300 C833 287 880 273 900 280 C920 287 943 323 940 340 C937 357 900 377 880 380 C860 383 830 373 820 360 C810 347 807 313 820 300Z" fill="#e6eef2" opacity="0.75"/><path d="M1050 260 C1062 253 1112 283 1120 300 C1128 317 1112 353 1100 360 C1088 367 1058 357 1050 340 C1042 323 1038 267 1050 260Z" fill="#e6eef2" opacity="0.75"/><path d="M340 220 C352 213 410 228 420 240 C430 252 412 283 400 290 C388 297 360 292 350 280 C340 268 328 227 340 220Z" fill="#e6eef2" opacity="0.75"/><path d="M560 300 C567 290 607 283 620 290 C633 297 647 330 640 340 C633 350 593 357 580 350 C567 343 553 310 560 300Z" fill="#e6eef2" opacity="0.75"/><path d="M960 460 C965 445 992 440 1000 450 C1008 460 1015 505 1010 520 C1005 535 978 550 970 540 C962 530 955 475 960 460Z" fill="#e6eef2" opacity="0.75"/><path d="M300 120 C300 142 292 212 300 250 C308 288 330 323 350 350 C370 377 408 400 420 410" fill="none" stroke="#f4f8fb" stroke-width="6" stroke-linecap="round" stroke-linejoin="round"/><path d="M650 140 C648 167 648 257 640 300 C632 343 620 378 600 400 C580 422 548 427 520 430 C492 433 445 422 430 420" fill="none" stroke="#f4f8fb" stroke-width="6" stroke-linecap="round" stroke-linejoin="round"/><path d="M760 110 C757 142 740 243 740 300 C740 357 757 425 760 450" fill="none" stroke="#f4f8fb" stroke-width="6" stroke-linecap="round" stroke-linejoin="round"/><path d="M1000 150 C1008 168 1033 240 1050 260 C1067 280 1075 265 1100 270 C1125 275 1183 287 1200 290" fill="none" stroke="#f4f8fb" stroke-width="6" stroke-linecap="round" stroke-linejoin="round"/><path d="M820 760 C823 733 827 633 840 600 C853 567 873 577 900 560 C927 543 983 510 1000 500" fill="none" stroke="#f4f8fb" stroke-width="6" stroke-linecap="round" stroke-linejoin="round"/><path d="M520 150 C550 153 660 173 700 170 C740 167 750 137 760 130" fill="none" stroke="#f4f8fb" stroke-width="6" stroke-linecap="round" stroke-linejoin="round"/><path d="M1150 270 C1158 273 1183 285 1200 290 C1217 295 1242 298 1250 300" fill="none" stroke="#f4f8fb" stroke-width="6" stroke-linecap="round" stroke-linejoin="round"/><path d="M312 102 C327 100 372 90 400 92 C428 94 452 104 482 112 C512 120 549 133 582 137 C615 141 659 140 682 137 C705 134 707 133 722 122 C737 111 755 83 772 72 C789 61 804 59 822 57 C840 55 865 57 882 62 C899 67 905 79 922 87 C939 95 967 101 982 112 C997 123 1002 143 1012 152 C1022 161 1032 165 1042 167 C1052 169 1062 156 1072 162 C1082 168 1095 187 1102 202 C1109 217 1113 236 1112 252 C1111 268 1100 290 1097 297" fill="none" stroke="#f5a955" stroke-width="9" stroke-linecap="round" stroke-linejoin="round"/><path d="M670 120 C670 143 673 217 670 260 C667 303 670 356 652 380 C634 404 577 402 562 407" fill="none" stroke="#f7b460" stroke-width="8" stroke-linecap="round" stroke-linejoin="round"/><path d="M420 82 L482 -10" fill="none" stroke="#f7b460" stroke-width="7" stroke-linecap="round" stroke-linejoin="round"/><path d="M902 92 L1042 -10" fill="none" stroke="#f7b460" stroke-width="7" stroke-linecap="round" stroke-linejoin="round"/><path d="M678 -10 L686 130" fill="none" stroke="#f7b460" stroke-width="6" stroke-linecap="round" stroke-linejoin="round"/><circle cx="315" cy="115" r="8" fill="#fff" stroke="#6d7584" stroke-width="4"/><rect x="331" y="109" width="100" height="12" fill="#8a94a3" opacity="0.3"/><circle cx="555" cy="165" r="8" fill="#fff" stroke="#6d7584" stroke-width="4"/><rect x="571" y="159" width="100" height="12" fill="#8a94a3" opacity="0.3"/><circle cx="305" cy="245" r="8" fill="#fff" stroke="#6d7584" stroke-width="4"/><rect x="321" y="239" width="100" height="12" fill="#8a94a3" opacity="0.3"/><circle cx="698" cy="292" r="8" fill="#fff" stroke="#6d7584" stroke-width="4"/><rect x="714" y="286" width="100" height="12" fill="#8a94a3" opacity="0.3"/><circle cx="466" cy="415" r="8" fill="#fff" stroke="#6d7584" stroke-width="4"/><rect x="482" y="409" width="100" height="12" fill="#8a94a3" opacity="0.3"/><circle cx="785" cy="72" r="8" fill="#fff" stroke="#6d7584" stroke-width="4"/><rect x="801" y="66" width="100" height="12" fill="#8a94a3" opacity="0.3"/><circle cx="985" cy="140" r="8" fill="#fff" stroke="#6d7584" stroke-width="4"/><rect x="1001" y="134" width="100" height="12" fill="#8a94a3" opacity="0.3"/><circle cx="1175" cy="298" r="8" fill="#fff" stroke="#6d7584" stroke-width="4"/><rect x="1191" y="292" width="100" height="12" fill="#8a94a3" opacity="0.3"/><circle cx="1005" cy="452" r="8" fill="#fff" stroke="#6d7584" stroke-width="4"/><rect x="1021" y="446" width="100" height="12" fill="#8a94a3" opacity="0.3"/><circle cx="1200" cy="560" r="8" fill="#fff" stroke="#6d7584" stroke-width="4"/><rect x="1216" y="554" width="100" height="12" fill="#8a94a3" opacity="0.3"/><circle cx="912" cy="660" r="8" fill="#fff" stroke="#6d7584" stroke-width="4"/><rect x="928" y="654" width="100" height="12" fill="#8a94a3" opacity="0.3"/><circle cx="305" cy="658" r="8" fill="#fff" stroke="#6d7584" stroke-width="4"/><rect x="321" y="652" width="100" height="12" fill="#8a94a3" opacity="0.3"/><circle cx="308" cy="758" r="8" fill="#fff" stroke="#6d7584" stroke-width="4"/><rect x="324" y="752" width="100" height="12" fill="#8a94a3" opacity="0.3"/><circle cx="592" cy="53" r="9" fill="#f5a93a"/><rect x="608" y="47" width="90" height="12" fill="#f5a93a" opacity="0.45"/><circle cx="235" cy="602" r="9" fill="#f5a93a"/><rect x="251" y="596" width="90" height="12" fill="#f5a93a" opacity="0.45"/><circle cx="800" cy="565" r="9" fill="#f5a93a"/><rect x="816" y="559" width="90" height="12" fill="#f5a93a" opacity="0.45"/><rect x="920" y="340" width="120" height="24" fill="#4aa3e0" opacity="0.3"/><path d="M870 310 L900 330 L880 350 Z M930 420 L970 440 L960 480 L930 460Z" fill="#8fd0f5"/><circle cx="785" cy="493" r="8" fill="#3b8a58"/><circle cx="1230" cy="745" r="10" fill="#3b8a58"/><rect x="1245" y="735" width="165" height="24" fill="#607a68" opacity="0.3"/></svg></div>
 <svg class="abs" style="left:-7px;top:-7px" width="1838" height="884" viewBox="0 0 1838 884">
  <rect x="580.3" y="482.3" width="41.6" height="40" rx="3.5" fill="none" stroke="#e8432e" stroke-width="2.6"/>
  <g fill="none" stroke="#fff" stroke-width="1.3" stroke-linecap="round" stroke-linejoin="round">
   <path d="M596.3 497.2 H609.7"/>
   <path d="M600.6 497 V495.6 Q600.6 494.6 601.6 494.6 H604.4 Q605.4 494.6 605.4 495.6 V497"/>
   <path d="M597.7 497.4 L598.9 509.3 Q599 510.4 600.1 510.4 H605.9 Q607 510.4 607.1 509.3 L608.3 497.4"/>
   <path d="M601.6 500.3 V507.2 M604.4 500.3 V507.2"/>
   <g transform="rotate(-45 637 503)"><rect x="630" y="500.3" width="8.6" height="5.4" rx="2.7"/><rect x="635.4" y="500.3" width="8.6" height="5.4" rx="2.7"/></g>
  </g>
 </svg>
 <div class="abs" style="left:543px;top:519px;width:64px;height:30px;border-radius:4px;background:#fff;color:#1d2129;font-size:13px;line-height:30px;text-align:center;-webkit-text-stroke:0.4px #1d2129">预览</div>
 <div class="abs" style="left:619px;top:519px;width:64px;height:30px;border-radius:4px;background:#2262f0;color:#fff;font-size:13px;line-height:30px;text-align:center;-webkit-text-stroke:0.4px #fff">创建</div>
 <div class="label" style="left:457px;top:625px">我的地图样式</div>
 <div class="label" style="left:793px;top:625px">我的地图样式-3</div>
 <div class="label" style="left:1130px;top:625px">我的地图样式</div>
</div>
</body></html>
